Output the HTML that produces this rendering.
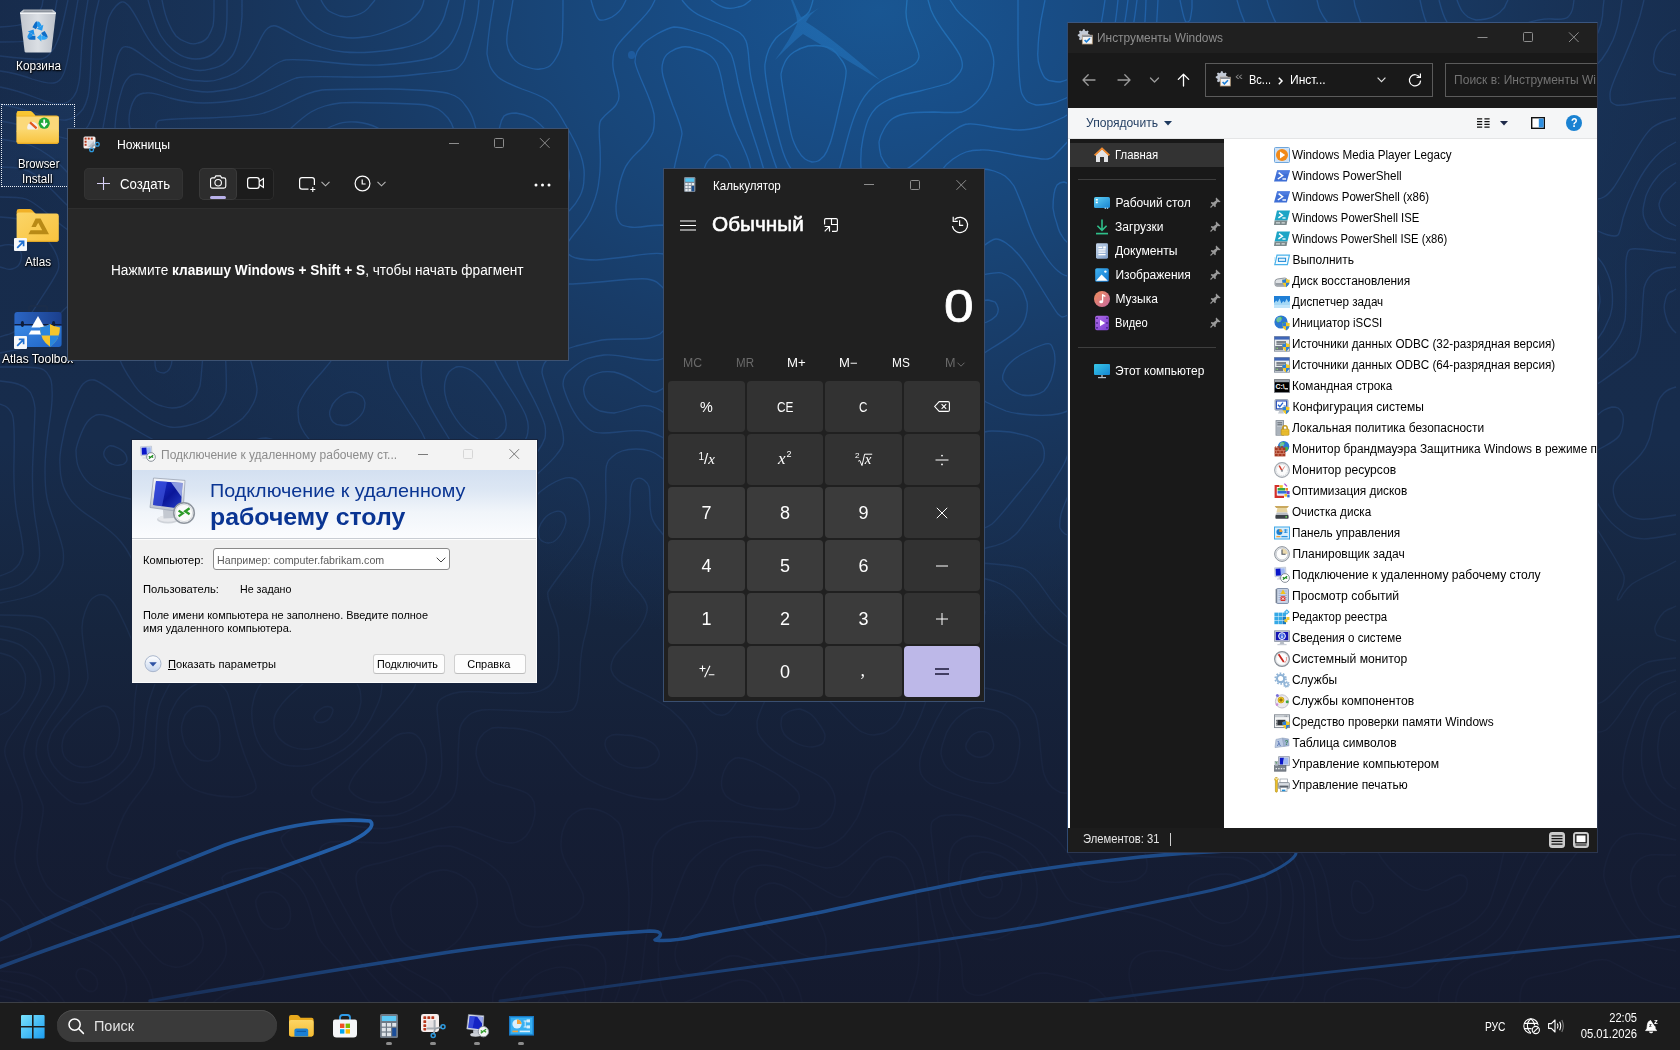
<!DOCTYPE html>
<html lang="ru"><head><meta charset="utf-8"><title>Desktop</title>
<style>
html,body{margin:0;padding:0;}
body{width:1680px;height:1050px;overflow:hidden;position:relative;font-family:"Liberation Sans","DejaVu Sans",sans-serif;font-size:12px;background:#15203a;}
.t{position:absolute;white-space:nowrap;line-height:1;transform-origin:0 50%;}
.a{position:absolute;}
.win{position:absolute;box-sizing:border-box;overflow:hidden;}
svg{position:absolute;overflow:visible;}
.sh{text-shadow:0 1px 2px rgba(0,0,0,.95),0 0 3px rgba(0,0,0,.8),1px 1px 1px rgba(0,0,0,.7);}
.cb{position:absolute;box-sizing:border-box;border-radius:4px;background:#3b3b3b;}
.cb.f{background:#323232;}
</style></head><body>
<div class="a" id="wall" style="left:0;top:0;width:1680px;height:1050px;
background:
radial-gradient(ellipse 900px 640px at 880px 10px, #195692 0%, #184e88 16%, #184679 35%, #183c68 54%, rgba(24,51,88,.92) 75%, rgba(23,44,76,0) 100%),
linear-gradient(180deg,#172b4b 0%,#172c4c 42%,#16253e 60%,#151e35 76%,#14192d 100%);"></div>
<svg style="left:0;top:0;mix-blend-mode:overlay;opacity:.33;-webkit-mask-image:linear-gradient(180deg,#000 0%,#000 40%,rgba(0,0,0,.45) 75%,rgba(0,0,0,.3) 100%);mask-image:linear-gradient(180deg,#000 0%,#000 40%,rgba(0,0,0,.45) 75%,rgba(0,0,0,.3) 100%)" width="1680" height="1050" viewBox="0 0 1680 1050" fill="none" stroke="#ffffff" stroke-width="1.3"><path d="M0 27Q20 26 26 23Q32 21 36 16Q40 12 42 6L43 0M0 42Q28 42 34 40Q40 38 46 29Q52 21 55 11L57 0M0 56Q36 60 42 59Q48 57 51 52Q55 48 57 42Q60 36 64 18L68 0M0 71Q16 73 32 79Q48 84 54 83Q60 82 63 75Q67 68 72 34L78 0M0 87Q16 90 34 97Q52 104 58 104Q64 104 68 102Q72 99 74 96Q77 92 78 86Q80 80 81 58Q82 36 85 18L88 0M162 0Q165 16 169 24Q172 31 176 36Q180 40 186 42Q192 45 198 43Q204 42 208 37Q211 32 213 26Q214 20 214 10L214 0M1552 321Q1556 320 1560 317Q1564 315 1568 309Q1571 304 1572 298Q1572 292 1571 288Q1569 284 1565 278Q1560 273 1545 260Q1530 248 1517 229Q1504 210 1500 209Q1496 207 1494 207Q1492 208 1475 228Q1458 248 1457 252Q1456 256 1458 258Q1460 260 1474 265Q1488 269 1494 273Q1500 277 1514 294Q1528 312 1532 315Q1536 319 1542 320Q1548 322 1552 321ZM1345 853Q1347 852 1347 844Q1348 836 1346 824Q1344 812 1340 802Q1336 792 1332 787Q1328 783 1320 781Q1312 779 1302 781Q1292 783 1282 772Q1272 760 1264 755Q1256 751 1248 751Q1240 752 1233 756Q1227 760 1225 764Q1223 768 1223 772Q1223 776 1226 779Q1228 782 1232 785Q1236 787 1242 788Q1248 789 1256 789Q1264 788 1274 786Q1284 784 1286 782Q1288 781 1306 809Q1324 837 1332 845Q1340 853 1342 854Q1344 855 1345 853ZM1365 913Q1370 912 1372 908Q1374 904 1373 900Q1373 896 1368 890Q1364 884 1360 882Q1356 880 1354 882Q1353 884 1352 888Q1351 892 1352 900Q1353 908 1357 911Q1360 914 1365 913ZM22 1048Q20 1040 17 1036Q14 1032 7 1029L0 1026M0 104Q16 107 38 114Q60 121 66 120Q72 119 76 116Q80 113 83 109Q86 104 88 96Q90 88 91 60Q92 33 95 16L99 0M148 0Q156 28 161 36Q166 44 173 50Q180 56 188 58Q196 60 204 58Q212 56 217 50Q223 44 225 36Q227 28 227 14L227 0M321 0Q325 8 329 11Q332 13 340 16Q348 18 357 15Q366 12 370 6L375 0M1545 340Q1550 340 1559 336Q1568 332 1575 324Q1582 316 1585 306Q1587 296 1585 288Q1583 280 1579 274Q1575 268 1562 256Q1548 244 1544 238Q1539 232 1529 204Q1518 176 1513 168Q1508 160 1502 156Q1496 152 1488 150Q1480 148 1472 147Q1464 147 1456 149Q1448 151 1444 153Q1440 156 1436 162Q1432 168 1424 195Q1416 222 1416 235Q1415 248 1419 260Q1423 272 1427 278Q1431 284 1436 287Q1440 290 1446 292Q1452 294 1466 295Q1480 296 1485 298Q1490 300 1495 304Q1500 309 1508 318Q1516 328 1522 333Q1528 337 1534 339Q1540 341 1545 340ZM1363 940Q1374 940 1386 936Q1397 932 1413 922Q1428 912 1442 908Q1456 904 1461 898Q1467 892 1467 886Q1468 880 1466 878Q1464 875 1460 875Q1456 875 1444 882Q1432 888 1428 890Q1424 891 1418 889Q1412 887 1404 881Q1396 875 1389 868Q1382 860 1377 851Q1372 841 1361 807Q1350 772 1347 768Q1344 763 1339 760Q1334 756 1317 750Q1300 744 1288 737Q1276 731 1270 729Q1264 728 1252 730Q1240 732 1228 738Q1216 744 1212 748Q1208 752 1205 758Q1203 764 1203 770Q1203 776 1205 782Q1208 788 1212 792Q1216 795 1220 797Q1224 799 1246 803Q1268 806 1274 809Q1280 811 1284 814Q1288 817 1297 828Q1307 840 1315 854Q1323 868 1325 876Q1328 884 1330 902Q1332 920 1334 925Q1336 931 1340 935Q1344 938 1348 939Q1352 941 1363 940ZM575 1048Q573 1020 572 1012Q570 1004 567 999Q564 994 560 992Q556 991 550 993Q544 995 539 1001Q534 1008 531 1016Q528 1024 528 1036L527 1048M30 1048Q27 1036 24 1031Q20 1026 16 1023Q12 1020 6 1019L0 1017M0 121Q20 124 42 131Q64 139 70 139Q76 138 80 135Q84 132 88 126Q92 119 95 108Q99 96 102 60Q106 24 109 17Q112 10 116 6Q120 2 122 2Q124 1 128 5Q132 9 140 24Q148 40 155 48Q162 56 171 62Q180 67 190 69Q200 72 210 69Q220 67 225 63Q229 60 232 56Q235 52 238 42Q241 32 242 16L242 0M296 0Q303 16 310 22Q316 28 324 32Q332 36 342 37Q352 39 364 37Q376 36 390 30Q404 25 410 21Q416 16 419 12Q422 8 423 4L424 0M1457 0Q1460 8 1462 11Q1464 14 1468 17Q1472 19 1476 20Q1480 20 1486 19Q1492 18 1496 15Q1500 13 1502 10Q1505 8 1506 4L1508 0M1540 358Q1552 356 1564 349Q1576 342 1581 337Q1586 332 1590 326Q1594 320 1597 314Q1599 308 1600 302Q1600 296 1598 286Q1595 276 1591 270Q1587 264 1575 252Q1562 240 1556 232Q1550 224 1546 214Q1542 204 1537 182Q1532 160 1530 156Q1528 151 1525 148Q1521 144 1513 140Q1504 135 1488 132Q1472 128 1462 129Q1452 129 1444 132Q1436 134 1429 139Q1423 144 1418 150Q1413 156 1404 172Q1395 188 1392 196Q1390 204 1389 210Q1389 216 1391 224Q1392 232 1398 251Q1404 270 1409 281Q1413 292 1417 298Q1421 304 1426 309Q1432 314 1438 317Q1444 320 1458 324Q1472 329 1483 338Q1494 348 1499 351Q1504 354 1516 357Q1528 359 1540 358ZM1676 182Q1664 192 1662 196Q1660 200 1659 204Q1659 208 1662 214Q1665 220 1670 223L1676 226M1146 381Q1155 380 1159 378Q1163 376 1165 372Q1168 368 1165 362Q1163 356 1159 354Q1156 351 1150 349Q1144 348 1140 348Q1136 348 1132 351Q1128 353 1125 359Q1122 364 1122 368Q1123 372 1124 374Q1125 376 1131 379Q1136 381 1146 381ZM0 576Q8 573 12 571Q16 568 19 564Q21 560 23 554Q24 548 19 524Q13 500 14 460Q15 420 12 414Q9 408 5 406L0 404M1375 958Q1403 956 1433 942Q1464 928 1470 924Q1476 921 1480 916Q1484 912 1488 906Q1491 900 1494 890Q1498 880 1502 860Q1507 840 1507 834Q1506 828 1505 827Q1504 826 1500 825Q1496 825 1460 838Q1424 850 1418 850Q1412 850 1408 848Q1404 847 1398 841Q1392 836 1387 828Q1382 820 1379 812Q1376 804 1372 787Q1368 769 1364 762Q1360 755 1354 749Q1348 743 1332 733Q1316 723 1306 712Q1296 702 1292 699Q1288 697 1284 696Q1280 696 1274 698Q1268 700 1241 714Q1215 728 1207 733Q1200 739 1196 743Q1192 748 1190 756Q1187 764 1188 772Q1189 780 1191 786Q1194 792 1197 796Q1200 800 1206 804Q1212 808 1240 814Q1268 819 1274 823Q1280 826 1285 831Q1290 836 1297 846Q1304 856 1308 866Q1313 876 1314 884Q1316 892 1317 912Q1318 932 1320 938Q1321 944 1324 948Q1327 952 1331 955Q1336 957 1342 958Q1348 959 1375 958ZM585 1048Q586 996 585 988Q584 980 580 975Q576 969 568 968Q560 966 550 969Q540 972 535 976Q530 980 525 986Q521 992 518 1002Q514 1012 513 1030L513 1048M37 1048Q34 1032 29 1026Q25 1020 18 1016Q12 1012 6 1011L0 1010M0 139Q20 142 30 145Q40 149 48 155Q56 160 68 173Q80 185 83 187Q85 188 89 188Q92 188 94 186Q97 184 98 180Q100 177 100 162Q100 148 101 140Q102 132 109 96Q116 60 118 55Q120 50 122 48Q124 46 128 47Q132 47 146 58Q160 68 168 72Q176 77 184 79Q192 81 202 81Q212 82 220 79Q228 77 235 73Q243 68 247 62Q252 56 258 44Q264 31 268 28Q272 25 276 26Q280 27 295 36Q310 44 321 47Q332 51 344 52Q356 53 372 52Q388 51 402 48Q416 45 424 41Q432 36 438 28Q444 20 446 10L449 0M1267 0Q1270 12 1279 29Q1288 46 1298 81Q1307 116 1310 119Q1312 122 1316 123Q1320 124 1328 121Q1336 119 1342 115Q1348 110 1351 105Q1354 100 1356 92Q1357 84 1356 76Q1355 68 1352 60Q1349 52 1345 45Q1340 37 1331 27Q1322 16 1319 8L1317 0M1439 0Q1443 16 1447 22Q1451 28 1456 32Q1462 36 1469 37Q1476 38 1486 36Q1496 35 1518 26Q1540 18 1552 19Q1565 20 1568 17Q1572 13 1573 7L1574 0M1503 380Q1515 380 1525 379Q1536 377 1546 374Q1556 371 1566 365Q1576 359 1585 352Q1594 344 1599 337Q1604 331 1607 323Q1611 316 1612 308Q1613 300 1612 290Q1611 280 1606 270Q1602 260 1586 246Q1571 232 1566 224Q1560 216 1556 204Q1552 192 1550 172Q1548 152 1544 144Q1540 136 1532 131Q1524 126 1502 121Q1480 115 1470 114Q1460 113 1450 114Q1440 115 1428 121Q1416 127 1407 136Q1398 144 1383 166Q1368 188 1367 194Q1365 200 1366 206Q1367 212 1378 240Q1389 268 1393 282Q1396 296 1399 314Q1402 332 1405 337Q1408 343 1414 347Q1420 352 1445 364Q1471 376 1481 378Q1492 380 1503 380ZM1676 163Q1664 169 1658 176Q1652 183 1649 189Q1645 196 1644 204Q1642 212 1644 218Q1646 224 1649 228Q1652 231 1658 234Q1664 238 1670 239L1676 240M979 324Q982 324 987 322Q992 320 996 316Q999 312 998 308Q997 304 995 302Q992 301 988 300Q984 300 980 302Q976 303 971 308Q966 312 967 316Q968 321 971 322Q975 324 979 324ZM1126 395Q1141 396 1152 394Q1164 392 1172 388Q1180 384 1184 378Q1188 372 1188 366Q1189 360 1185 354Q1181 348 1173 342Q1164 336 1154 331Q1144 327 1136 327Q1128 326 1122 330Q1116 333 1111 341Q1106 348 1102 356Q1099 364 1099 372Q1099 380 1100 384Q1102 388 1107 391Q1112 394 1126 395ZM164 373Q168 372 170 368Q172 364 172 360Q171 356 170 353Q168 351 164 351Q160 351 157 353Q154 356 155 362Q155 368 157 371Q160 373 164 373ZM489 441Q494 440 498 438Q501 436 504 432Q507 428 506 422Q506 416 503 410Q500 404 492 393Q484 381 478 376Q472 370 466 368Q460 366 456 367Q452 369 449 372Q446 376 445 382Q444 388 445 394Q446 400 449 407Q452 413 456 419Q460 425 466 431Q472 436 478 439Q484 441 489 441ZM0 590Q16 587 22 583Q28 579 32 574Q37 568 39 560Q41 552 36 524Q31 496 33 456Q35 416 35 408Q34 400 32 396Q31 392 27 389Q24 386 20 385Q16 383 8 382L0 381M853 556Q858 556 865 553Q872 550 888 537Q904 525 910 522Q916 519 920 519Q924 520 942 526Q960 532 968 532Q976 532 982 529Q988 527 992 524Q997 520 1018 494Q1040 468 1043 462Q1045 456 1044 450Q1043 444 1039 441Q1036 439 1028 436Q1020 434 1010 432Q1000 431 992 431Q984 431 978 435Q972 439 967 452Q961 464 957 471Q952 478 946 483Q940 489 932 494Q924 499 918 501Q912 502 894 498Q876 494 870 495Q864 496 858 498Q852 501 848 504Q843 508 840 512Q838 516 836 520Q834 524 834 530Q833 536 835 541Q836 546 838 549Q841 552 844 554Q848 556 853 556ZM1327 1048Q1323 1000 1325 996Q1326 992 1328 990Q1330 988 1339 984Q1348 980 1356 979Q1364 978 1372 979Q1380 980 1390 984Q1400 988 1404 988Q1408 988 1412 986Q1416 983 1430 970Q1444 956 1462 946Q1480 936 1486 932Q1492 927 1497 919Q1502 912 1511 890Q1520 868 1531 848Q1541 828 1543 818Q1545 808 1544 802Q1543 796 1539 790Q1536 785 1532 782Q1528 780 1524 779Q1520 779 1514 781Q1508 783 1492 794Q1476 806 1466 811Q1456 815 1442 818Q1428 820 1422 819Q1416 818 1412 816Q1408 815 1402 807Q1396 800 1391 782Q1386 764 1383 758Q1380 751 1375 746Q1370 740 1358 730Q1345 720 1340 714Q1334 708 1325 688Q1316 667 1312 665Q1308 662 1304 662Q1300 661 1292 663Q1284 664 1278 667Q1272 670 1254 685Q1236 700 1214 714Q1192 727 1185 736Q1178 744 1176 752Q1174 760 1174 766Q1174 772 1176 780Q1178 788 1181 794Q1184 800 1188 805Q1192 810 1196 813Q1201 816 1206 818Q1212 820 1232 823Q1252 825 1260 828Q1268 831 1278 839Q1287 848 1294 860Q1300 872 1303 884Q1305 896 1304 920Q1303 944 1303 964Q1304 984 1302 988Q1300 992 1290 1007Q1280 1021 1277 1029Q1274 1036 1273 1042L1272 1048M83 767Q89 768 98 764Q107 760 111 756Q114 752 116 748Q118 744 119 738Q120 732 119 726Q118 720 116 716Q115 712 111 709Q108 706 104 706Q100 706 92 710Q84 714 76 721Q69 728 65 734Q62 740 62 746Q62 752 64 756Q66 760 71 763Q76 767 83 767ZM1676 711Q1668 715 1665 720Q1662 724 1660 730Q1659 736 1658 744Q1657 752 1660 764Q1662 776 1665 780Q1668 784 1672 787L1676 789M434 953Q444 952 449 948Q455 944 460 938Q464 932 470 922Q475 912 477 906Q478 900 476 894Q475 888 472 884Q469 880 462 876Q456 872 450 871Q444 869 436 871Q428 872 415 880Q402 888 397 894Q393 900 391 906Q390 912 393 922Q395 932 401 940Q408 948 416 951Q424 954 434 953ZM993 897Q998 896 1000 892Q1003 888 1002 882Q1000 876 996 873Q992 871 987 871Q983 872 980 876Q977 880 978 886Q979 892 983 895Q988 899 993 897ZM594 1048Q596 1021 601 1000Q606 980 606 972Q606 964 605 960Q604 956 600 952Q597 948 592 947Q588 945 582 945Q576 944 564 946Q552 947 542 951Q532 954 524 959Q517 964 508 972Q500 980 498 984Q495 988 493 994Q492 1000 494 1024L497 1048M44 1048Q41 1032 36 1024Q31 1016 24 1011Q16 1006 8 1004L0 1003M0 167Q16 167 22 169Q28 170 34 174Q40 178 56 194Q72 211 78 213Q84 216 90 215Q96 214 104 209Q112 203 118 194Q123 184 124 178Q124 172 120 156Q116 140 115 130Q115 120 118 104Q122 88 124 84Q126 80 129 77Q132 74 138 74Q144 74 164 82Q184 90 196 91Q208 93 218 91Q228 90 236 88Q244 85 250 82Q256 79 266 71Q276 63 282 61Q288 58 326 62Q364 66 380 65Q396 64 410 62Q424 60 432 58Q440 55 446 49Q452 44 456 34Q461 24 463 12L465 0M1180 0Q1184 20 1186 22Q1188 23 1190 20Q1191 16 1192 8L1192 0M1237 0Q1243 24 1255 40Q1267 56 1270 62Q1274 68 1277 82Q1280 96 1279 106Q1277 116 1264 138Q1250 160 1246 174Q1243 188 1242 218Q1241 248 1239 270Q1236 292 1238 299Q1240 306 1245 311Q1250 316 1257 318Q1264 321 1272 321Q1280 322 1286 320Q1292 319 1296 315Q1300 312 1301 306Q1303 300 1298 278Q1293 256 1295 246Q1296 236 1299 230Q1303 224 1307 220Q1312 215 1318 213Q1324 211 1328 212Q1332 212 1338 215Q1344 219 1350 225Q1356 232 1362 241Q1368 251 1371 260Q1375 268 1377 276Q1378 284 1378 292Q1378 300 1374 316Q1369 332 1368 338Q1367 344 1369 350Q1371 356 1376 362Q1381 368 1392 375Q1404 381 1428 388Q1452 394 1470 395Q1488 397 1510 396Q1532 395 1542 393Q1552 390 1562 385Q1572 380 1588 368Q1603 356 1610 348Q1617 340 1620 334Q1623 328 1625 320Q1626 312 1626 286Q1625 260 1627 255Q1628 249 1632 249Q1636 248 1656 251L1676 253M1676 142Q1660 150 1650 163Q1640 176 1634 190Q1627 204 1623 218Q1620 233 1618 235Q1616 237 1608 235Q1600 233 1590 226Q1581 220 1575 212Q1570 204 1567 194Q1565 184 1564 162Q1562 140 1560 134Q1557 128 1553 123Q1548 119 1542 116Q1536 113 1518 110Q1500 106 1478 99Q1456 93 1448 94Q1440 95 1422 101Q1404 108 1400 109Q1396 109 1392 108Q1388 106 1385 99Q1381 92 1376 72Q1371 52 1364 32Q1357 12 1355 6L1354 0M1420 0Q1424 20 1430 30Q1436 41 1442 47Q1448 53 1456 55Q1464 58 1492 51Q1520 45 1528 45Q1536 46 1550 51Q1564 56 1572 55Q1580 53 1586 49Q1592 44 1595 38Q1599 32 1601 24Q1603 16 1603 8L1604 0M537 179Q541 180 543 178Q545 176 545 172Q545 168 543 164Q540 160 536 159Q532 157 530 159Q528 160 527 166Q527 172 530 175Q532 179 537 179ZM485 465Q495 464 501 461Q508 458 514 453Q520 448 524 442Q528 436 528 430Q529 424 526 416Q523 408 510 388Q497 368 493 356Q488 344 488 338Q489 332 496 316Q503 300 503 294Q503 288 502 282Q500 276 498 272Q496 267 492 263Q488 259 484 257Q480 255 476 254Q472 254 468 257Q464 260 462 264Q460 268 458 294Q455 320 453 324Q450 328 441 336Q432 343 428 348Q425 352 423 358Q421 364 421 370Q421 376 422 384Q424 392 427 400Q430 408 445 432Q460 457 464 460Q468 464 472 465Q476 467 485 465ZM850 577Q856 576 876 563Q896 550 904 547Q912 543 920 542Q928 542 952 546Q976 549 986 548Q996 546 1003 543Q1010 540 1016 534Q1022 528 1041 500Q1060 472 1064 464Q1068 456 1073 438Q1079 420 1085 417Q1092 414 1130 408Q1168 401 1179 397Q1191 392 1195 388Q1200 384 1203 378Q1206 372 1207 364Q1208 356 1206 350Q1204 344 1197 338Q1190 332 1167 319Q1144 305 1138 303Q1132 301 1126 301Q1120 301 1116 303Q1112 305 1108 309Q1104 312 1096 326Q1088 340 1084 352Q1079 364 1076 384Q1073 404 1071 408Q1068 412 1058 414Q1048 416 1032 415Q1016 414 1006 411Q996 407 986 402Q977 396 972 390Q966 384 964 378Q963 372 968 366Q973 360 992 348Q1012 336 1018 330Q1024 324 1026 316Q1028 308 1027 302Q1025 296 1023 291Q1020 286 1014 280Q1008 275 1002 273Q996 271 962 280Q928 288 925 292Q922 296 922 302Q922 308 933 336Q944 364 943 368Q942 372 935 382Q928 392 927 396Q926 400 932 418Q937 436 937 442Q937 448 935 452Q934 456 931 460Q928 464 922 467Q916 471 894 474Q872 477 860 482Q848 487 838 495Q828 504 823 516Q817 528 816 540Q815 552 819 560Q822 568 829 573Q836 578 840 578Q844 579 850 577ZM172 408Q176 408 180 407Q184 406 188 403Q193 400 195 396Q198 392 200 386Q201 380 203 354Q204 328 202 323Q200 318 196 315Q191 312 184 313Q176 313 152 321Q128 328 124 330Q120 332 118 336Q115 340 116 346Q117 352 120 360Q123 368 131 380Q138 392 147 398Q156 405 162 406Q168 408 172 408ZM0 603Q28 598 38 593Q47 588 54 580Q61 572 63 564Q64 556 63 550Q62 544 56 526Q49 508 47 498Q45 488 45 470Q45 452 49 426Q53 400 52 390Q52 380 49 376Q47 372 44 370Q40 367 20 367L0 367M1101 600Q1107 600 1109 598Q1112 596 1113 594Q1113 592 1113 588Q1112 584 1111 582Q1109 580 1104 578Q1100 576 1094 578Q1088 580 1086 584Q1085 588 1087 592Q1089 596 1092 598Q1096 600 1101 600ZM90 782Q100 780 109 774Q118 768 124 760Q130 752 131 744Q133 736 134 718Q134 700 137 684Q141 668 139 660Q137 652 127 629Q116 605 112 601Q108 596 104 595Q100 594 96 596Q92 598 90 601Q88 604 85 612Q82 620 82 628Q82 636 85 654Q88 672 88 678Q87 684 84 690Q81 696 68 712Q54 728 51 734Q49 740 48 744Q47 748 49 756Q51 764 58 771Q64 778 72 781Q80 784 90 782ZM1445 1048Q1437 1004 1439 994Q1441 984 1445 978Q1448 973 1452 969Q1456 965 1474 956Q1492 946 1500 938Q1508 930 1522 901Q1536 872 1551 850Q1566 828 1569 820Q1571 812 1570 804Q1569 796 1566 788Q1564 780 1559 772Q1555 764 1549 759Q1544 754 1538 753Q1532 751 1526 751Q1520 752 1514 754Q1508 757 1492 769Q1476 781 1468 786Q1460 790 1452 791Q1444 792 1436 789Q1428 786 1424 781Q1420 776 1415 764Q1411 752 1407 746Q1403 740 1386 728Q1368 715 1361 708Q1354 700 1352 694Q1350 688 1349 682Q1349 676 1351 670Q1352 664 1357 652Q1362 640 1362 636Q1362 632 1358 626Q1353 620 1345 617Q1336 614 1330 615Q1324 617 1292 636Q1260 655 1242 673Q1224 691 1206 703Q1188 714 1182 719Q1176 724 1172 730Q1167 736 1164 742Q1162 748 1161 756Q1161 764 1162 772Q1163 780 1167 790Q1170 800 1175 808Q1180 816 1184 820Q1188 823 1194 826Q1200 829 1224 832Q1248 835 1256 838Q1264 840 1272 848Q1281 856 1286 868Q1292 880 1293 894Q1294 908 1289 928Q1285 948 1281 959Q1276 970 1261 995Q1246 1020 1243 1028Q1240 1036 1239 1042L1238 1048M720 715Q724 716 728 713Q732 710 737 701Q742 692 744 684Q745 676 744 670Q743 664 737 658Q731 652 720 647Q708 641 700 640Q692 638 686 640Q680 641 677 645Q674 648 673 652Q671 656 674 664Q676 672 692 690Q708 709 712 712Q716 715 720 715ZM1676 693Q1660 700 1655 706Q1651 712 1647 722Q1644 732 1642 744Q1641 756 1642 766Q1644 776 1647 784Q1651 792 1657 798Q1663 804 1669 807L1676 810M324 722Q329 720 331 716Q333 712 333 710Q332 707 330 707Q328 706 324 707Q320 709 317 712Q314 716 314 718Q314 720 317 722Q320 723 324 722ZM786 809Q792 808 795 806Q798 804 799 800Q800 796 798 792Q795 788 790 784Q786 780 775 773Q764 767 754 762Q744 758 740 758Q736 757 732 760Q728 763 726 767Q723 772 722 778Q721 784 722 788Q723 792 726 796Q730 800 737 803Q744 806 752 807Q760 809 770 809Q780 810 786 809ZM603 1048Q607 1020 617 996Q626 972 628 936Q630 900 628 884Q626 868 624 848Q623 828 618 822Q612 816 606 813Q600 810 594 809Q588 808 584 809Q580 809 576 812Q572 814 568 819Q565 824 563 830Q561 836 561 846Q561 856 571 872Q581 888 583 894Q584 900 583 904Q582 908 579 912Q576 916 568 920Q559 924 548 926Q536 928 528 926Q520 924 518 920Q515 916 513 902Q510 888 507 882Q504 876 494 868Q484 860 470 854Q456 847 450 846Q444 846 438 846Q432 847 414 853Q396 859 380 863Q364 866 360 869Q356 872 356 878Q356 884 359 894Q362 904 373 926Q384 948 392 957Q400 966 418 975Q435 984 442 989Q448 995 457 1009Q467 1024 470 1036L474 1048M997 918Q1003 916 1008 912Q1013 908 1017 902Q1020 896 1021 890Q1022 884 1021 878Q1019 872 1016 867Q1012 863 1006 859Q1000 855 992 853Q984 851 978 853Q972 854 969 857Q965 860 963 866Q961 872 960 880Q960 888 962 894Q964 901 968 906Q972 912 976 915Q980 917 986 918Q992 919 997 918ZM52 1048Q47 1028 42 1019Q36 1010 28 1005Q20 1000 10 998L0 996M1633 1048Q1628 1032 1622 1024Q1616 1016 1610 1012Q1604 1007 1596 1006Q1588 1005 1580 1006Q1572 1008 1566 1012Q1561 1016 1559 1022Q1557 1028 1557 1038L1557 1048M1350 1048Q1353 1024 1356 1020Q1358 1016 1361 1015Q1364 1013 1367 1015Q1370 1016 1373 1020Q1375 1024 1377 1036L1378 1048M0 197Q20 197 26 199Q32 201 48 214Q64 228 70 231Q76 235 80 235Q84 236 90 234Q96 233 102 229Q108 225 115 219Q123 212 130 204Q136 196 139 190Q143 184 143 176Q144 168 137 152Q131 136 130 128Q128 120 130 111Q132 102 136 97Q140 93 146 93Q152 92 170 98Q188 103 204 103Q220 103 238 100Q256 97 272 89Q288 81 296 78Q304 76 346 77Q388 78 420 74Q452 71 456 69Q460 67 464 61Q467 56 472 38Q477 20 478 10L479 0M1158 0Q1155 56 1153 64Q1150 72 1142 90Q1134 108 1132 114Q1131 120 1131 126Q1131 132 1134 140Q1138 148 1145 155Q1152 162 1162 167Q1172 172 1184 175Q1196 178 1198 180Q1200 183 1204 196Q1208 210 1209 225Q1211 240 1209 250Q1208 260 1202 274Q1196 288 1192 291Q1188 294 1184 294Q1180 294 1162 286Q1144 278 1138 277Q1132 276 1126 276Q1120 277 1110 282Q1100 287 1086 300Q1072 313 1068 315Q1064 317 1062 317Q1060 316 1058 314Q1056 312 1040 286Q1024 260 1018 254Q1012 247 1006 243Q1000 239 996 239Q992 239 981 248Q970 256 963 259Q956 262 936 263Q916 265 912 266Q908 267 905 272Q901 276 901 282Q900 288 904 314Q909 340 908 346Q908 352 901 368Q893 384 892 392Q890 400 893 420Q897 440 894 444Q892 448 889 450Q887 452 869 461Q852 470 842 477Q832 484 822 494Q812 504 807 514Q802 524 793 544Q785 564 784 570Q784 576 785 586Q787 596 786 600Q785 604 783 606Q781 608 775 611Q768 613 760 614Q752 615 744 613Q736 612 730 608Q724 605 715 590Q707 576 687 558Q667 540 661 532Q654 524 652 518Q650 512 650 502Q650 492 649 487Q648 483 644 480Q640 477 636 479Q632 481 631 487Q630 492 630 506Q631 520 627 534Q623 548 622 556Q621 564 624 572Q627 580 637 590Q646 600 647 606Q648 612 643 622Q638 632 625 644Q613 656 612 662Q610 668 612 672Q613 676 617 679Q620 683 642 693Q664 704 672 711Q680 718 686 725Q691 732 694 738Q697 744 697 752Q697 760 695 768Q693 776 688 783Q684 789 678 793Q672 797 666 799Q660 800 650 799Q640 798 628 795Q616 791 604 787Q592 782 584 777Q576 772 565 758Q554 744 549 740Q544 736 532 732Q520 728 508 728Q496 727 492 728Q488 730 484 733Q480 737 478 742Q476 748 476 754Q477 760 479 766Q481 772 484 776Q488 780 492 782Q496 784 510 787Q524 791 528 794Q532 797 534 802Q535 808 535 814Q534 820 532 826Q529 832 526 836Q522 840 519 841Q516 843 510 843Q504 843 486 836Q468 829 460 827Q452 826 444 828Q436 829 414 836Q392 842 384 843Q376 843 356 842Q336 841 330 842Q324 844 322 846Q320 848 319 852Q319 856 320 860Q322 864 339 898Q357 932 372 953Q388 975 406 987Q424 999 430 1005Q436 1010 442 1019Q447 1028 450 1038L453 1048M1676 118Q1660 122 1653 127Q1646 132 1633 155Q1620 178 1614 187Q1608 195 1604 197Q1600 199 1598 199Q1596 199 1592 197Q1588 194 1585 185Q1581 176 1581 154Q1581 132 1573 112Q1566 92 1569 88Q1572 84 1584 75Q1596 66 1602 59Q1608 51 1613 40Q1618 28 1620 14L1622 0M818 161Q820 160 824 156Q827 152 829 146Q832 140 839 108Q847 76 846 70Q845 64 840 58Q836 52 832 49Q828 47 822 46Q816 45 808 46Q800 48 794 52Q788 56 785 62Q782 68 781 74Q781 80 786 106Q790 132 793 140Q796 148 799 152Q801 156 805 159Q808 161 812 162Q816 162 818 161ZM1542 86Q1540 89 1534 90Q1528 92 1520 91Q1512 91 1505 87Q1499 84 1497 80Q1496 76 1498 73Q1500 71 1504 69Q1508 67 1516 66Q1524 66 1528 67Q1532 69 1536 73Q1541 76 1542 80Q1544 84 1542 86ZM1212 155Q1208 156 1205 154Q1203 152 1201 144Q1199 136 1199 126Q1200 116 1202 108Q1204 100 1208 94Q1212 88 1218 83Q1224 79 1230 77Q1236 75 1240 75Q1244 76 1248 79Q1252 82 1254 87Q1257 92 1257 96Q1257 100 1256 106Q1254 112 1249 120Q1244 128 1238 134Q1232 141 1224 147Q1216 154 1212 155ZM531 208Q538 208 545 206Q552 204 559 198Q565 192 567 186Q570 180 569 172Q568 164 563 154Q557 144 549 134Q540 123 532 118Q524 114 516 113Q508 113 504 116Q501 120 500 126Q498 132 499 148Q500 163 502 174Q504 185 506 191Q509 196 512 200Q516 204 520 206Q524 208 531 208ZM302 285Q308 284 312 280Q316 276 318 268Q321 260 320 254Q319 248 316 242Q312 236 306 232Q300 227 290 223Q280 220 272 219Q264 219 259 222Q255 224 252 228Q250 232 250 238Q249 244 251 250Q253 256 256 260Q259 264 265 270Q271 276 278 280Q284 284 290 285Q296 286 302 285ZM321 605Q326 604 337 598Q348 593 364 581Q380 570 404 565Q428 560 440 554Q453 548 461 540Q468 532 478 514Q489 496 510 477Q532 458 538 451Q543 444 545 438Q546 432 545 426Q544 420 533 398Q521 376 519 368Q516 360 517 352Q518 344 525 330Q533 316 533 312Q532 308 520 278Q508 249 504 243Q500 238 494 234Q488 230 476 228Q464 227 456 229Q448 232 445 238Q442 244 441 264Q440 284 437 294Q434 304 429 310Q424 316 410 326Q396 336 393 342Q389 348 388 356Q387 364 389 372Q390 380 394 388Q399 396 409 412Q420 428 424 437Q428 446 429 453Q429 460 427 466Q425 472 414 484Q404 496 390 516Q377 536 370 541Q364 545 358 546Q352 547 344 547Q336 547 306 541Q276 536 269 538Q261 540 258 544Q254 548 254 552Q253 556 255 562Q257 568 267 578Q276 587 290 596Q304 604 310 605Q316 606 321 605ZM1352 297Q1348 301 1344 302Q1340 302 1336 300Q1332 298 1326 289Q1321 280 1318 270Q1316 260 1317 256Q1318 252 1321 248Q1324 244 1328 243Q1332 242 1336 244Q1340 245 1344 248Q1348 252 1352 258Q1356 264 1357 274Q1359 284 1357 288Q1356 293 1352 297ZM613 1048Q619 1024 628 1010Q636 996 638 990Q641 984 643 962Q645 940 649 920Q653 900 652 878Q652 856 654 850Q656 844 659 840Q662 836 669 831Q676 826 688 823Q700 820 716 821Q732 821 764 825Q796 829 804 829Q812 829 819 827Q825 824 830 818Q834 812 835 804Q836 796 832 789Q828 782 824 779Q820 776 798 765Q776 754 768 746Q760 738 758 733Q757 728 757 722Q758 716 763 705Q768 694 772 690Q776 686 780 685Q784 683 790 682Q796 682 802 683Q808 685 818 692Q828 699 842 714Q856 729 862 732Q868 735 874 735Q880 734 884 733Q888 731 892 728Q896 725 899 720Q902 716 905 706Q908 696 906 688Q904 680 898 673Q892 666 874 653Q856 640 853 636Q850 632 848 626Q846 620 847 616Q848 612 852 606Q856 600 874 584Q892 567 900 563Q908 558 916 557Q924 555 946 559Q968 562 994 564Q1020 566 1026 570Q1032 573 1044 590Q1056 608 1066 616Q1076 624 1082 626Q1088 629 1096 630Q1104 632 1117 630Q1129 628 1138 622Q1147 616 1151 608Q1155 600 1156 594Q1157 588 1156 582Q1155 576 1151 566Q1146 556 1140 550Q1134 544 1125 540Q1116 537 1092 536Q1068 536 1065 534Q1062 532 1060 528Q1059 524 1061 514Q1064 504 1076 478Q1088 452 1092 445Q1096 439 1102 434Q1108 428 1118 424Q1128 420 1155 414Q1183 408 1191 405Q1200 402 1208 395Q1217 388 1228 370Q1240 352 1248 349Q1256 347 1266 347Q1276 348 1286 351Q1296 353 1310 363Q1324 372 1342 381Q1360 389 1374 399Q1387 408 1400 422Q1412 436 1416 438Q1420 441 1424 440Q1428 438 1438 429Q1448 420 1456 417Q1464 414 1476 412Q1488 411 1514 411Q1540 412 1548 410Q1556 409 1564 405Q1572 401 1602 381Q1632 360 1635 356Q1638 352 1639 346Q1641 340 1642 318Q1643 296 1644 288Q1646 280 1651 275Q1656 270 1666 268L1676 267M0 615Q24 615 32 616Q40 617 44 619Q48 621 52 627Q56 632 62 646Q68 660 69 670Q70 680 67 688Q65 696 51 716Q38 736 37 742Q36 748 36 754Q37 760 42 771Q48 781 58 791Q68 801 74 803Q80 805 88 803Q96 801 110 791Q124 781 131 773Q138 764 141 756Q143 748 145 728Q146 708 152 692Q158 676 159 670Q160 664 158 658Q157 652 149 634Q141 616 138 594Q136 572 133 562Q129 552 121 542Q113 532 95 520Q76 508 70 499Q64 490 62 482Q60 474 60 465Q59 456 63 438Q66 420 73 404Q79 388 83 384Q88 379 94 380Q100 381 124 400Q148 419 156 422Q164 426 170 427Q176 428 186 426Q196 424 204 420Q212 416 218 408Q224 400 226 392Q227 384 225 346Q222 308 219 301Q216 295 210 292Q204 289 198 290Q192 291 174 297Q156 303 148 305Q140 306 132 306Q124 306 108 302Q92 298 86 298Q80 298 72 303Q64 308 55 320Q47 332 41 337Q36 342 28 346Q20 350 10 351L0 353M1044 391Q1040 394 1034 395Q1028 396 1022 395Q1016 393 1010 389Q1005 384 1003 380Q1002 376 1004 372Q1005 368 1010 363Q1016 357 1026 352Q1036 347 1042 345Q1048 343 1050 344Q1052 345 1053 349Q1055 352 1055 362Q1054 372 1051 380Q1048 387 1044 391ZM1676 387Q1668 389 1664 393Q1660 397 1658 402Q1656 408 1653 422Q1651 436 1648 442Q1646 448 1641 454Q1636 460 1627 468Q1618 476 1615 482Q1612 488 1614 496Q1616 504 1620 508Q1623 512 1628 515Q1632 518 1640 519Q1648 520 1662 517L1676 515M348 425Q351 424 356 420Q361 416 363 412Q365 408 365 403Q364 397 360 395Q356 392 352 392Q348 392 344 394Q340 396 336 400Q332 404 331 408Q329 412 330 416Q331 420 333 422Q336 425 340 425Q344 426 348 425ZM1216 572Q1224 572 1230 569Q1236 565 1243 559Q1250 552 1256 544Q1262 536 1263 532Q1264 528 1261 520Q1258 512 1253 504Q1247 496 1243 492Q1238 488 1233 487Q1228 485 1220 487Q1212 489 1205 495Q1199 500 1194 508Q1189 516 1186 526Q1184 536 1185 544Q1186 552 1191 559Q1196 567 1202 570Q1208 573 1216 572ZM1462 1048Q1455 1008 1456 998Q1458 988 1461 984Q1463 980 1468 977Q1472 973 1490 968Q1508 963 1511 959Q1515 956 1531 923Q1548 890 1566 867Q1584 844 1588 836Q1593 828 1596 818Q1599 808 1598 800Q1597 792 1591 780Q1585 768 1579 758Q1572 748 1565 742Q1558 736 1551 733Q1544 729 1536 728Q1528 727 1520 729Q1512 730 1506 733Q1500 736 1488 744Q1476 753 1470 755Q1464 758 1460 758Q1456 757 1452 755Q1448 752 1444 744Q1440 736 1438 726Q1436 716 1437 710Q1438 704 1444 694Q1449 684 1449 680Q1450 676 1449 672Q1447 668 1444 664Q1440 660 1426 650Q1412 641 1401 626Q1390 612 1374 596Q1357 580 1354 574Q1350 568 1347 554Q1344 540 1340 534Q1336 528 1330 524Q1324 519 1316 517Q1308 515 1299 518Q1289 520 1287 522Q1284 524 1282 528Q1280 532 1281 536Q1282 540 1289 552Q1295 564 1297 570Q1300 576 1299 584Q1299 592 1296 598Q1293 604 1288 610Q1282 616 1265 628Q1248 641 1231 660Q1214 680 1190 698Q1166 716 1159 724Q1152 732 1149 738Q1147 744 1146 752Q1146 760 1149 772Q1152 784 1157 798Q1162 812 1168 820Q1173 828 1178 832Q1184 837 1190 839Q1196 841 1218 843Q1240 844 1248 846Q1256 849 1261 852Q1266 856 1269 860Q1273 864 1276 870Q1279 876 1280 882Q1281 888 1281 900Q1281 912 1277 924Q1273 936 1267 946Q1260 955 1252 961Q1244 967 1238 969Q1232 971 1226 970Q1220 970 1200 962Q1180 954 1170 952Q1160 950 1151 951Q1143 952 1137 956Q1132 960 1131 964Q1129 968 1129 974Q1129 980 1131 986Q1132 992 1135 998Q1138 1004 1145 1011Q1152 1019 1166 1027Q1180 1036 1184 1042L1188 1048M309 749Q319 748 327 744Q336 741 341 736Q347 732 351 726Q356 720 358 714Q360 708 361 702Q361 696 360 690Q358 684 354 680Q351 676 345 673Q340 670 332 670Q324 670 318 673Q312 676 298 688Q284 700 279 708Q273 716 274 724Q274 732 279 738Q284 744 292 747Q300 750 309 749ZM1676 681Q1656 687 1648 696Q1641 704 1634 722Q1627 740 1624 756Q1622 772 1623 780Q1625 788 1630 796Q1636 804 1646 811Q1656 818 1666 822L1676 826M991 940Q997 940 1007 935Q1016 930 1024 921Q1032 912 1035 904Q1038 896 1037 886Q1036 876 1032 868Q1028 860 1020 854Q1012 847 998 842Q984 836 974 836Q964 836 959 840Q953 844 951 850Q949 856 949 868Q948 880 950 891Q952 902 956 911Q960 919 966 926Q972 932 978 936Q984 939 991 940ZM174 967Q179 968 186 965Q192 963 197 957Q202 952 203 946Q204 940 201 932Q198 924 192 918Q185 912 176 908Q168 905 160 904Q152 903 145 905Q137 908 135 910Q134 912 132 916Q131 920 132 924Q133 928 136 934Q139 940 150 951Q160 962 164 964Q168 966 174 967ZM1676 989Q1652 984 1634 974Q1616 964 1610 961Q1604 959 1598 960Q1592 960 1578 966Q1564 972 1548 974Q1532 977 1528 979Q1524 982 1522 987Q1520 992 1520 1000Q1519 1008 1521 1028L1523 1048M59 1048Q54 1024 47 1014Q41 1004 32 999Q24 993 12 991L0 988M760 1048Q758 1028 755 1020Q752 1012 748 1008Q744 1004 740 1003Q736 1002 728 1004Q720 1007 711 1013Q702 1020 698 1026Q694 1032 693 1040L691 1048M169 1048Q171 1024 174 1016Q177 1008 196 990Q216 972 220 966Q225 960 226 954Q227 948 225 940Q223 932 218 922Q212 912 204 905Q196 898 176 891Q156 883 136 880Q115 876 112 874Q108 872 107 868Q106 864 115 838Q123 812 135 798Q146 784 149 779Q152 774 154 767Q155 760 156 736Q157 712 160 704Q163 696 172 680Q181 664 181 658Q180 652 170 638Q160 624 158 614Q155 604 158 592Q160 580 168 564Q176 548 178 542Q179 536 175 528Q172 520 164 513Q156 506 150 504Q144 502 126 498Q108 494 98 489Q88 484 83 476Q78 468 77 462Q76 456 76 450Q77 444 81 434Q85 424 89 420Q92 417 96 415Q100 414 108 416Q116 418 136 430Q156 442 164 444Q172 447 180 446Q188 446 196 444Q204 441 220 433Q236 424 243 418Q249 412 253 404Q257 396 257 390Q257 384 251 362Q246 340 246 330Q247 320 249 314Q251 308 255 306Q260 303 282 308Q304 312 311 312Q318 312 323 310Q328 309 331 306Q333 304 336 298Q338 292 340 272Q341 252 339 243Q336 234 329 227Q322 220 299 209Q276 197 268 195Q260 192 254 192Q248 191 240 193Q232 195 228 200Q224 204 222 210Q221 216 219 232Q217 248 214 254Q211 260 206 264Q201 268 187 276Q172 284 160 288Q148 291 142 291Q136 292 130 290Q124 289 114 282Q103 276 101 272Q98 268 98 264Q98 260 103 252Q109 244 135 218Q161 192 165 186Q170 180 171 176Q172 172 171 168Q171 164 163 146Q155 128 156 125Q156 123 158 121Q160 119 208 118Q256 116 264 113Q272 111 290 102Q308 92 322 90Q336 89 388 89Q440 90 450 94Q460 97 465 105Q471 112 474 122Q477 132 479 146Q481 160 481 170Q480 180 478 186Q476 192 470 195Q464 199 442 200Q420 202 416 205Q412 208 411 210Q410 212 410 216Q410 220 416 234Q421 248 423 256Q425 264 425 272Q425 280 422 286Q420 292 416 296Q413 300 408 303Q404 306 384 312Q364 319 359 321Q354 324 345 340Q336 356 322 372Q307 388 303 396Q298 404 298 410Q298 416 299 422Q301 428 305 434Q309 440 314 444Q320 448 328 450Q336 452 358 450Q380 448 384 450Q389 452 391 456Q393 460 393 464Q392 468 386 484Q380 500 372 510Q364 520 356 524Q348 528 338 528Q328 529 306 524Q284 519 272 519Q260 519 254 520Q248 522 242 525Q235 528 231 532Q227 536 226 540Q225 544 225 550Q226 556 231 566Q236 576 256 598Q277 620 281 630Q286 640 286 646Q285 652 283 656Q281 660 271 672Q260 684 257 690Q254 696 252 708Q251 720 254 730Q256 740 262 749Q268 757 276 761Q284 766 294 766Q304 767 316 763Q328 759 336 754Q344 750 352 743Q359 736 365 728Q371 720 375 710Q380 700 381 694Q382 688 382 682Q382 676 374 658Q367 640 368 634Q369 628 389 610Q409 592 436 578Q463 564 469 559Q476 554 480 549Q485 544 498 521Q512 497 532 479Q553 460 557 454Q562 448 563 444Q564 440 563 434Q563 428 552 402Q542 376 542 372Q542 368 544 364Q546 360 553 355Q560 351 576 346Q592 342 602 340Q612 339 628 339Q644 339 650 338Q656 336 660 334Q664 331 667 325Q669 320 670 314Q670 308 669 302Q668 296 666 292Q664 288 659 284Q655 280 647 279Q640 278 610 281Q580 284 570 284Q560 284 554 282Q548 280 543 274Q537 268 534 260Q532 252 532 246Q532 240 535 236Q538 232 551 224Q564 216 570 210Q576 204 580 196Q584 188 584 178Q585 168 581 156Q577 144 565 124Q554 104 547 100Q540 95 522 89Q504 82 498 77Q492 71 490 66Q488 60 487 54Q487 48 490 24L494 0M591 0Q596 19 600 20Q604 21 612 17Q620 12 623 6L626 0M711 0Q720 7 726 8Q732 9 738 7Q744 6 747 3L751 0M813 0Q811 8 809 12Q806 16 793 25Q780 34 776 38Q772 43 769 49Q766 56 765 64Q764 72 771 106Q779 140 783 152Q787 164 794 173Q800 181 804 184Q808 187 814 188Q820 189 826 187Q832 184 835 180Q838 176 845 148Q852 120 858 108Q864 95 872 88Q880 80 895 74Q910 68 915 64Q919 60 919 56Q919 52 913 38Q906 24 906 12L907 0M1146 0Q1145 32 1142 44Q1140 56 1124 90Q1108 124 1106 134Q1103 144 1105 152Q1107 160 1118 178Q1129 196 1134 206Q1139 216 1140 224Q1141 232 1138 238Q1135 244 1130 248Q1124 252 1104 263Q1084 273 1078 275Q1072 277 1068 276Q1064 276 1058 271Q1052 266 1046 257Q1040 248 1035 238Q1030 228 1024 210Q1017 192 1014 186Q1010 180 1005 176Q1000 173 994 171Q988 169 982 169Q976 169 972 171Q968 173 964 176Q961 180 959 184Q958 188 959 206Q961 224 960 228Q959 232 956 236Q953 240 949 242Q945 244 941 245Q936 246 916 244Q896 243 892 245Q888 247 886 249Q885 252 884 260Q883 268 886 292Q889 316 888 326Q888 336 879 360Q870 384 869 406Q867 428 865 434Q863 440 857 448Q850 456 826 474Q803 492 787 514Q771 536 763 541Q756 547 748 549Q740 551 732 551Q724 550 714 546Q704 542 697 537Q690 532 685 526Q681 520 679 514Q677 508 677 492Q677 476 672 469Q668 462 662 458Q656 453 650 451Q644 449 636 449Q628 449 622 451Q616 453 612 457Q608 460 607 464Q605 468 606 496Q606 524 599 550Q591 576 591 594Q591 612 586 632Q580 652 580 674Q579 696 577 702Q575 708 572 710Q568 712 562 712Q556 713 522 711Q488 709 482 710Q476 711 472 713Q468 715 464 720Q461 724 460 728Q459 732 458 756Q458 780 456 788Q455 796 449 802Q443 808 431 814Q420 820 410 823Q400 827 390 828Q380 830 354 826Q328 823 318 823Q308 824 300 826Q292 828 287 832Q282 836 281 838Q281 840 283 844Q284 848 296 861Q308 874 313 881Q317 888 328 910Q339 932 359 960Q380 987 402 1004Q424 1021 428 1028Q432 1034 434 1041L435 1048M1676 98Q1652 100 1636 103Q1620 106 1616 105Q1613 104 1611 102Q1610 100 1610 94Q1610 88 1623 60Q1635 32 1640 16L1644 0M0 217Q20 218 28 222Q36 226 45 237Q54 248 57 256Q60 264 58 270Q56 276 40 300Q25 324 18 329Q12 334 6 335L0 337M1676 333Q1668 326 1666 317Q1663 308 1665 302Q1666 296 1668 294Q1669 292 1673 291L1676 289M1676 670Q1660 672 1652 677Q1644 681 1639 686Q1634 692 1623 709Q1612 726 1606 730Q1600 733 1594 732Q1588 731 1576 723Q1563 716 1556 713Q1548 710 1522 706Q1496 703 1492 699Q1487 696 1481 682Q1474 668 1469 661Q1464 653 1442 635Q1420 617 1403 596Q1385 576 1381 566Q1377 556 1376 540Q1375 524 1373 520Q1372 516 1368 513Q1364 511 1330 496Q1296 482 1280 468Q1264 455 1254 453Q1244 451 1238 451Q1232 452 1226 455Q1220 457 1208 466Q1196 475 1180 491Q1164 507 1156 510Q1148 514 1138 513Q1128 512 1116 508Q1105 504 1101 500Q1097 496 1096 490Q1095 484 1097 476Q1099 468 1103 460Q1107 452 1111 447Q1116 441 1122 437Q1128 433 1141 428Q1154 424 1181 420Q1208 416 1226 406Q1244 397 1248 396Q1252 395 1256 396Q1260 398 1268 405Q1276 412 1282 414Q1288 417 1312 413Q1336 409 1344 411Q1352 412 1358 415Q1364 418 1371 425Q1378 432 1383 440Q1387 448 1389 456Q1390 464 1391 482Q1392 501 1396 503Q1400 505 1410 505Q1420 505 1426 503Q1432 501 1436 499Q1440 496 1442 492Q1444 488 1449 468Q1453 448 1457 442Q1461 436 1467 432Q1472 428 1480 426Q1488 424 1498 424Q1508 424 1534 429Q1560 435 1566 436Q1572 436 1576 435Q1580 433 1590 423Q1600 412 1604 410Q1608 408 1612 407Q1616 407 1618 408Q1620 409 1622 413Q1624 416 1623 424Q1622 432 1619 436Q1616 440 1605 446Q1593 452 1591 456Q1588 460 1588 470Q1588 480 1591 490Q1595 500 1603 512Q1611 524 1620 530Q1628 537 1636 538Q1644 540 1660 537L1676 534M774 1048Q773 1020 771 1012Q769 1004 765 996Q760 989 754 984Q748 980 740 980Q732 980 710 991Q688 1002 682 1003Q676 1005 672 1005Q668 1004 665 998Q662 992 660 980Q658 968 658 958Q658 948 660 940Q662 932 674 900Q685 868 690 862Q695 856 703 850Q712 844 722 841Q732 837 742 837Q752 836 762 837Q772 839 792 843Q812 848 818 848Q824 848 830 845Q836 843 844 836Q851 828 857 818Q862 808 866 792Q870 776 873 772Q876 768 886 760Q896 753 902 746Q908 739 915 728Q921 716 925 704Q928 692 928 686Q928 680 925 674Q922 668 917 662Q911 656 896 644Q882 632 879 626Q875 620 876 614Q876 608 880 600Q884 592 890 585Q896 579 904 574Q912 570 920 569Q928 567 958 573Q988 579 996 582Q1004 585 1011 590Q1018 596 1031 614Q1045 632 1055 639Q1064 645 1074 650Q1084 655 1094 655Q1104 655 1124 650Q1144 645 1152 642Q1160 639 1172 631Q1184 624 1190 621Q1196 619 1202 619Q1208 619 1211 622Q1214 624 1215 628Q1216 632 1215 636Q1214 640 1209 650Q1204 660 1197 668Q1189 676 1169 694Q1148 711 1140 716Q1132 720 1126 720Q1120 721 1106 711Q1092 701 1086 700Q1080 699 1076 701Q1073 704 1071 708Q1069 712 1068 722Q1067 732 1068 738Q1070 744 1073 747Q1076 750 1080 751Q1084 752 1096 750Q1108 749 1114 752Q1120 755 1126 764Q1132 773 1144 801Q1156 829 1160 835Q1164 841 1168 845Q1172 849 1176 851Q1180 853 1186 855Q1192 856 1216 857Q1240 857 1244 859Q1248 860 1253 864Q1259 868 1263 876Q1267 884 1267 894Q1268 904 1265 914Q1261 924 1255 932Q1248 940 1240 943Q1232 946 1224 946Q1216 945 1208 942Q1200 939 1174 927Q1148 914 1111 909Q1074 904 1069 900Q1064 896 1054 876Q1044 856 1040 852Q1036 847 1028 842Q1020 837 1002 829Q984 821 972 817Q960 814 950 815Q940 815 937 818Q933 820 932 822Q931 824 931 830Q931 836 936 868Q941 900 943 908Q945 916 953 934Q961 952 962 968Q962 984 964 988Q966 992 971 994Q976 996 982 995Q988 994 1008 985Q1028 976 1034 974Q1040 973 1046 973Q1052 974 1066 977Q1080 981 1086 983Q1092 986 1098 990Q1104 995 1121 1015Q1138 1036 1141 1042L1144 1048M0 626Q17 628 24 631Q32 634 38 640Q44 646 48 655Q53 664 54 672Q55 680 54 686Q53 692 41 710Q30 728 27 738Q23 748 24 756Q25 764 33 782Q41 800 43 806Q44 812 40 830Q37 848 37 856Q37 864 40 872Q43 880 47 886Q52 892 58 896Q64 900 76 904Q88 908 92 911Q96 914 114 935Q132 956 140 968Q148 980 150 986Q152 992 153 998Q153 1004 151 1008Q150 1012 141 1024Q133 1036 131 1042L129 1048M823 743Q820 746 812 747Q804 747 796 743Q788 739 784 734Q781 728 781 724Q781 720 782 717Q784 714 790 711Q796 709 800 709Q804 710 809 713Q814 716 819 724Q825 732 825 736Q825 740 823 743ZM648 767Q644 768 636 768Q628 768 620 764Q613 760 609 754Q605 748 605 744Q605 740 607 738Q608 737 612 735Q616 734 624 735Q632 735 638 737Q644 738 649 741Q655 744 657 748Q660 752 659 756Q658 760 655 763Q652 765 648 767ZM1676 951Q1652 947 1646 944Q1640 941 1636 937Q1632 934 1627 927Q1622 920 1616 908Q1610 896 1608 890Q1605 884 1604 878Q1603 872 1606 862Q1609 852 1612 847Q1616 841 1620 838Q1624 835 1632 834Q1640 832 1658 836L1676 840M69 1048Q62 1020 54 1008Q45 996 37 991Q28 985 14 983L0 980M630 1048Q636 1033 640 1029Q644 1026 648 1025Q652 1023 654 1023Q656 1024 658 1026Q660 1028 662 1038L663 1048M563 0Q563 32 562 42Q560 52 556 58Q552 65 548 67Q544 69 540 69Q536 70 527 67Q517 64 513 58Q508 52 507 44Q506 36 510 18L513 0M682 0Q688 8 694 12Q699 16 718 23Q736 30 740 33Q744 36 746 41Q748 46 749 61Q750 76 753 86Q755 96 764 128Q773 160 779 174Q784 187 788 194Q792 200 798 205Q804 211 822 219Q840 227 846 233Q852 238 859 251Q866 264 871 282Q875 300 874 312Q874 324 865 347Q856 370 853 397Q850 424 847 432Q844 440 839 446Q834 452 827 457Q820 462 795 473Q770 484 768 486Q767 488 764 498Q761 508 759 512Q756 516 752 520Q748 524 742 526Q736 528 730 528Q724 528 720 526Q716 525 712 522Q709 520 706 516Q704 513 703 506Q703 500 707 488Q711 476 711 474Q710 472 707 468Q704 464 688 453Q672 442 662 437Q652 432 644 431Q636 430 618 432Q600 434 594 432Q588 430 580 421Q573 412 568 400Q563 388 563 384Q563 380 565 376Q567 372 575 366Q583 360 589 358Q596 356 604 355Q612 354 632 358Q652 361 658 360Q664 359 672 354Q680 348 684 340Q688 332 689 322Q689 312 686 296Q684 281 682 274Q680 267 676 262Q672 256 664 254Q656 252 632 256Q608 259 596 260Q584 260 576 258Q569 256 567 252Q566 248 567 244Q569 240 579 228Q589 216 593 204Q598 192 599 180Q601 168 600 146Q598 124 601 120Q604 116 610 111Q616 106 617 103Q619 100 619 96Q619 92 616 80Q612 68 613 60Q613 52 617 46Q621 40 635 26Q649 12 652 6L655 0M1137 0Q1132 40 1126 58Q1119 76 1107 94Q1096 112 1076 133Q1056 154 1054 156Q1052 158 1048 159Q1044 160 1016 155Q988 149 980 150Q972 150 966 152Q960 154 953 159Q946 164 942 170Q937 176 936 182Q934 188 933 200Q932 212 930 214Q928 217 922 218Q916 219 900 214Q884 210 877 205Q870 200 866 192Q862 184 861 168Q860 152 863 138Q866 124 869 118Q872 112 876 108Q880 104 888 100Q896 96 920 91Q944 85 949 83Q954 80 957 76Q961 72 962 68Q963 64 961 58Q959 52 947 36Q935 20 931 10L928 0M1676 75Q1660 72 1658 70Q1656 68 1654 64Q1653 60 1654 56Q1654 52 1657 46Q1660 41 1664 37Q1668 33 1672 31L1676 30M376 196Q364 208 358 209Q352 210 344 208Q336 206 324 201Q312 196 302 190Q293 184 286 178Q279 172 275 166Q271 160 271 156Q270 152 272 148Q273 144 289 130Q304 116 311 112Q318 108 325 106Q332 104 340 103Q348 102 384 103Q420 104 426 105Q432 106 438 109Q443 112 448 118Q452 123 454 130Q456 136 457 144Q457 152 454 158Q452 164 448 166Q444 169 428 170Q412 172 406 174Q400 176 394 180Q388 184 376 196ZM1094 238Q1088 244 1084 245Q1080 247 1076 246Q1072 246 1068 243Q1064 240 1062 236Q1059 232 1057 224Q1054 216 1053 208Q1053 200 1054 194Q1055 188 1057 185Q1060 182 1064 182Q1068 183 1074 186Q1080 190 1086 196Q1092 201 1096 207Q1099 212 1101 218Q1102 224 1101 228Q1100 232 1094 238ZM164 271Q152 276 146 276Q140 276 134 273Q128 270 126 265Q123 260 125 254Q126 248 132 240Q138 232 147 224Q156 217 164 213Q172 210 178 211Q184 211 188 215Q192 218 194 223Q196 228 196 234Q196 240 195 244Q193 248 191 252Q188 256 182 261Q176 266 164 271ZM392 287Q388 288 384 289Q380 289 376 287Q372 286 369 281Q365 276 364 270Q364 264 365 258Q366 252 368 248Q370 244 373 242Q376 240 380 240Q384 240 388 242Q392 245 396 249Q400 252 403 258Q405 264 405 268Q406 272 404 276Q402 280 399 283Q396 286 392 287ZM0 246Q8 244 12 245Q16 246 18 248Q20 250 21 253Q22 256 21 260Q20 264 18 266Q16 268 12 269Q8 270 4 268L0 267M1160 480Q1152 485 1144 486Q1136 486 1131 483Q1126 480 1125 474Q1123 468 1125 461Q1128 455 1134 449Q1139 444 1148 441Q1156 437 1164 437Q1172 436 1179 438Q1185 440 1187 444Q1188 448 1186 454Q1183 460 1175 468Q1168 476 1160 480ZM1356 475Q1352 477 1344 476Q1336 475 1328 469Q1321 464 1319 458Q1317 452 1320 446Q1324 440 1328 438Q1332 436 1338 435Q1344 435 1348 436Q1352 438 1356 441Q1359 444 1362 449Q1364 454 1364 459Q1364 464 1362 468Q1360 472 1356 475ZM338 511Q332 512 310 507Q288 503 253 501Q219 500 211 496Q204 492 201 488Q199 484 199 480Q199 476 204 470Q210 464 225 455Q240 446 250 442Q260 438 266 438Q272 439 276 441Q280 443 294 455Q308 467 314 469Q320 471 334 472Q348 473 354 476Q360 479 361 483Q362 488 359 495Q356 502 350 506Q344 510 338 511ZM1676 658Q1656 660 1648 662Q1640 665 1634 670Q1628 675 1618 687Q1608 699 1602 702Q1596 705 1590 704Q1584 703 1570 698Q1556 692 1536 688Q1516 683 1508 678Q1500 673 1485 657Q1471 640 1448 620Q1426 600 1417 588Q1408 576 1405 566Q1402 556 1402 552Q1403 548 1405 543Q1408 539 1412 536Q1416 533 1422 531Q1428 528 1439 528Q1450 528 1467 534Q1484 541 1490 540Q1496 539 1497 538Q1498 536 1497 532Q1496 528 1488 520Q1480 511 1475 504Q1471 496 1468 488Q1466 480 1466 474Q1466 468 1467 462Q1468 456 1472 450Q1476 445 1482 441Q1488 438 1494 437Q1500 436 1508 438Q1516 439 1524 442Q1532 446 1539 451Q1546 456 1552 462Q1557 468 1590 518Q1622 568 1624 576Q1625 584 1620 592Q1616 600 1618 600Q1620 600 1623 594Q1627 588 1632 584Q1638 580 1657 571L1676 561M126 462Q124 465 120 465Q116 466 112 464Q108 463 106 459Q103 456 104 452Q105 448 109 446Q112 445 118 448Q124 451 126 455Q128 460 126 462ZM396 815Q388 816 376 816Q364 816 349 812Q333 808 324 804Q315 800 313 796Q310 792 313 788Q316 784 339 766Q363 748 388 720Q413 692 415 686Q417 680 416 666Q415 652 416 644Q416 636 419 628Q421 620 425 614Q428 608 434 602Q440 597 446 594Q452 590 474 583Q496 576 499 572Q502 568 508 546Q515 524 521 514Q527 504 534 498Q540 491 548 486Q556 481 562 479Q568 477 572 478Q576 479 579 482Q581 484 584 490Q587 496 589 508Q590 520 589 526Q587 532 584 540Q580 549 565 568Q550 588 548 592Q547 596 551 608Q556 620 558 628Q559 636 559 650Q559 664 557 672Q555 680 551 684Q548 688 540 691Q532 694 500 693Q468 691 460 692Q452 693 446 696Q440 699 439 701Q437 704 437 708Q437 712 440 738Q443 764 441 774Q439 784 435 790Q431 796 426 800Q420 805 412 809Q404 813 396 815ZM950 643Q944 644 932 640Q920 636 914 632Q908 629 904 624Q900 620 898 616Q897 612 898 606Q899 600 901 596Q904 592 908 589Q912 586 918 584Q924 582 932 583Q940 584 955 590Q970 596 977 602Q984 608 985 612Q985 616 980 622Q976 628 966 635Q956 642 950 643ZM214 614Q212 616 204 618Q196 620 190 617Q184 614 182 609Q179 604 182 598Q184 592 190 588Q196 585 202 587Q208 589 212 597Q217 604 216 608Q216 612 214 614ZM0 639Q16 642 22 646Q28 650 33 657Q38 664 40 670Q41 676 41 680Q41 684 39 690Q37 696 24 716Q10 736 7 742Q4 748 5 754Q6 760 13 776Q20 792 21 798Q23 804 22 812Q22 820 18 836Q14 852 15 862Q17 872 24 886Q31 900 39 910Q48 920 54 924Q60 928 76 935Q92 941 102 949Q112 956 119 966Q125 976 126 984Q128 992 123 1002Q119 1012 109 1024Q100 1036 96 1039Q92 1042 76 1019Q61 996 54 989Q48 983 38 978Q28 973 14 972L0 971M249 794Q244 797 232 797Q220 797 208 794Q196 791 190 787Q184 783 179 775Q175 768 171 754Q167 740 168 728Q168 716 174 706Q179 696 187 690Q196 683 202 682Q208 680 212 681Q216 682 220 684Q224 687 227 692Q229 696 235 722Q241 748 249 766Q257 784 256 788Q255 792 249 794ZM1136 880Q1132 881 1122 882Q1112 883 1102 881Q1092 878 1086 874Q1080 870 1069 855Q1059 840 1051 834Q1044 828 1014 815Q984 803 960 796Q936 788 930 784Q924 780 921 774Q919 768 920 760Q921 752 929 735Q936 719 944 706Q952 694 958 690Q964 686 970 686Q976 686 990 689Q1004 692 1014 696Q1023 700 1028 704Q1032 708 1035 714Q1038 720 1040 744Q1042 768 1044 774Q1046 780 1049 784Q1052 788 1056 790Q1060 793 1064 793Q1068 794 1086 790Q1104 786 1108 787Q1112 788 1116 791Q1120 795 1126 805Q1132 816 1140 838Q1148 860 1147 866Q1147 872 1143 875Q1140 878 1136 880ZM788 1048Q787 1016 786 1008Q784 1000 781 992Q777 984 772 978Q767 972 760 966Q752 960 744 958Q736 955 730 956Q724 957 712 965Q700 973 696 974Q692 975 688 974Q684 973 681 971Q678 968 677 964Q675 960 675 954Q675 948 677 944Q678 940 681 935Q684 930 694 919Q704 908 711 890Q717 872 720 868Q723 864 727 860Q732 856 740 853Q748 850 758 850Q768 850 794 859Q820 867 826 868Q832 868 838 866Q844 863 858 850Q872 837 880 834Q888 830 894 832Q900 834 904 837Q908 840 913 846Q918 852 921 860Q924 868 928 890Q931 912 936 932Q942 952 939 976Q936 1000 939 1008Q941 1016 944 1018Q948 1021 954 1021Q960 1021 992 1013Q1024 1004 1032 1003Q1040 1003 1048 1003Q1056 1004 1066 1007Q1076 1010 1084 1014Q1092 1019 1098 1025Q1105 1032 1108 1040L1112 1048M193 861Q192 863 187 861Q182 860 180 858Q178 856 177 854Q177 852 178 851Q180 850 184 851Q188 852 192 856Q195 860 193 861ZM1676 930Q1656 925 1650 921Q1644 916 1639 908Q1635 900 1632 890Q1630 880 1631 874Q1632 868 1636 863Q1640 858 1646 856Q1652 854 1664 855L1676 855M192 1048Q197 1024 204 1014Q210 1004 219 998Q228 991 244 986Q259 980 262 978Q264 976 264 972Q264 968 252 948Q241 928 231 904Q222 880 222 878Q223 876 226 874Q229 872 245 869Q260 867 270 869Q280 871 286 875Q292 879 296 883Q300 887 304 894Q308 901 312 916Q316 932 319 938Q322 944 335 957Q348 970 360 989Q372 1008 388 1019Q404 1029 408 1034Q412 1039 413 1043L415 1048M1234 921Q1228 924 1220 923Q1212 921 1204 916Q1196 910 1192 903Q1187 896 1188 892Q1188 888 1189 886Q1190 884 1197 880Q1204 877 1212 875Q1220 874 1226 874Q1232 874 1237 877Q1242 880 1246 886Q1249 892 1248 900Q1247 908 1244 913Q1240 919 1234 921ZM1128 0Q1124 32 1119 48Q1113 64 1105 78Q1096 92 1086 101Q1076 110 1064 117Q1052 123 1040 127Q1028 130 1020 130Q1012 130 992 127Q972 123 968 124Q964 124 956 129Q948 134 930 150Q912 167 906 169Q900 172 896 171Q892 170 888 167Q884 163 881 156Q879 148 879 142Q880 136 884 129Q888 122 892 119Q896 116 904 114Q912 112 934 112Q956 113 962 112Q968 110 976 103Q984 95 988 88Q992 80 993 70Q995 60 992 52Q990 44 987 40Q984 36 971 24Q957 12 954 6L950 0M810 450Q804 452 796 453Q788 453 770 449Q752 445 730 443Q708 441 695 434Q682 428 667 415Q652 402 636 407Q620 412 614 413Q608 413 600 411Q593 408 588 402Q584 396 584 392Q583 388 585 384Q586 380 589 377Q592 375 598 373Q604 371 614 372Q624 374 638 383Q652 393 656 392Q660 391 668 385Q676 379 684 370Q692 362 696 355Q701 348 703 342Q705 336 705 330Q705 324 703 306Q700 288 699 272Q698 256 695 247Q692 238 688 235Q684 231 678 228Q672 226 666 225Q660 225 648 226Q636 228 630 227Q624 226 622 225Q620 224 618 220Q616 216 616 206Q617 196 620 182Q624 168 628 163Q632 157 641 149Q650 140 653 132Q655 124 654 114Q652 104 644 86Q636 68 635 62Q635 56 637 52Q639 48 643 44Q647 40 657 34Q668 28 674 27Q680 27 690 30Q700 33 709 36Q717 40 723 44Q728 49 731 54Q734 60 738 82Q743 104 751 129Q760 155 767 181Q774 208 777 214Q779 220 782 224Q786 228 791 232Q796 236 812 242Q828 248 834 252Q840 255 846 261Q852 268 856 276Q860 284 861 292Q863 300 863 306Q862 312 861 318Q859 324 850 344Q841 364 838 394Q834 424 829 433Q824 441 820 444Q816 447 810 450ZM360 176Q352 181 348 182Q344 183 338 183Q332 183 328 181Q324 180 319 176Q314 172 311 168Q309 164 308 160Q307 156 310 148Q313 140 320 134Q326 128 335 125Q344 121 356 122Q368 123 378 128Q388 132 390 136Q391 140 389 144Q387 148 378 159Q368 170 360 176ZM1584 666Q1580 668 1558 669Q1536 670 1530 669Q1524 667 1518 665Q1512 662 1504 655Q1496 648 1470 620Q1444 592 1437 582Q1431 572 1431 566Q1431 560 1433 558Q1435 556 1437 555Q1440 555 1444 555Q1448 556 1462 562Q1476 568 1484 570Q1492 571 1504 569Q1516 567 1520 565Q1524 563 1528 560Q1532 556 1534 546Q1537 536 1535 526Q1533 516 1530 512Q1526 508 1511 500Q1496 492 1491 486Q1487 480 1486 476Q1485 472 1486 468Q1486 464 1491 459Q1496 455 1504 455Q1512 456 1518 460Q1525 464 1530 470Q1534 476 1541 488Q1547 500 1559 512Q1572 523 1579 534Q1586 544 1587 553Q1588 561 1582 573Q1576 584 1574 590Q1573 596 1574 607Q1576 617 1583 637Q1589 656 1588 660Q1588 664 1584 666ZM553 542Q548 544 544 542Q539 540 539 536Q538 532 539 528Q540 524 544 519Q548 514 554 512Q560 510 563 513Q566 516 566 522Q565 528 561 534Q557 540 553 542ZM1676 641Q1660 637 1657 635Q1655 632 1655 630Q1654 628 1657 622Q1660 616 1664 612Q1668 609 1672 608L1676 606M520 665Q516 668 496 668Q476 667 466 664Q456 662 453 659Q449 656 447 652Q445 648 445 642Q445 636 446 631Q448 627 451 623Q454 620 457 618Q460 617 464 616Q468 616 472 617Q476 618 488 628Q500 638 511 645Q522 652 523 654Q524 656 524 659Q524 663 520 665ZM0 653Q8 655 12 657Q17 660 20 664Q23 668 25 674Q26 680 25 686Q24 692 22 696Q20 700 14 706Q8 712 4 713L0 715M215 758Q212 761 208 761Q204 761 200 760Q196 758 192 754Q188 750 185 745Q183 740 182 734Q181 728 182 724Q183 720 185 715Q188 711 192 708Q196 706 200 706Q204 706 207 707Q209 708 212 712Q216 716 217 720Q219 724 220 736Q220 748 219 752Q218 756 215 758ZM1002 782Q996 784 988 783Q980 783 970 780Q960 777 954 773Q948 770 945 765Q942 760 941 754Q941 748 944 740Q946 732 951 725Q956 718 962 714Q968 709 974 708Q980 707 988 709Q996 710 1002 713Q1008 716 1013 722Q1018 728 1019 736Q1021 744 1018 756Q1016 768 1012 774Q1008 780 1002 782ZM402 798Q396 801 388 802Q380 803 371 802Q362 800 356 796Q350 792 349 788Q349 784 354 776Q359 768 374 754Q388 741 394 737Q400 733 406 733Q412 732 416 735Q420 738 422 743Q425 748 426 754Q427 760 426 766Q426 772 421 781Q416 789 412 793Q407 796 402 798ZM804 1048Q804 1012 802 1002Q800 992 797 986Q794 980 789 974Q785 968 767 952Q749 936 744 930Q739 924 736 914Q733 904 733 898Q734 892 735 886Q737 880 740 876Q743 872 747 869Q752 866 762 865Q772 865 784 869Q796 873 814 884Q832 895 838 897Q844 898 848 896Q852 894 862 879Q873 864 876 861Q880 858 884 857Q888 856 892 857Q896 857 900 860Q904 862 908 869Q912 876 914 884Q916 892 918 924Q920 956 918 970Q916 984 906 1008Q897 1032 895 1040L893 1048M1676 907Q1668 905 1665 903Q1661 900 1659 894Q1657 888 1659 884Q1661 880 1664 878Q1668 876 1672 876L1676 876M286 926Q284 929 278 929Q272 930 266 925Q260 920 258 912Q255 904 256 900Q258 896 260 894Q263 892 269 892Q276 891 282 896Q288 901 290 909Q291 916 290 920Q289 924 286 926ZM0 899Q8 903 13 910Q18 916 23 924Q28 932 30 938Q32 944 31 946Q31 948 27 951Q24 954 12 956L0 958M94 991Q92 992 88 991Q84 989 81 985Q77 980 76 976Q76 972 78 970Q80 968 84 969Q88 970 92 973Q96 976 97 980Q98 984 97 987Q96 990 94 991ZM211 1048Q213 1036 216 1029Q220 1023 226 1018Q232 1014 238 1013Q244 1012 250 1013Q256 1015 262 1019Q268 1023 272 1029Q276 1036 277 1042L279 1048M973 1048Q978 1040 985 1035Q992 1031 1002 1028Q1012 1024 1022 1023Q1032 1022 1040 1023Q1048 1024 1056 1027Q1064 1030 1069 1035Q1074 1040 1076 1044L1077 1048M1118 0Q1116 20 1114 30Q1111 40 1107 50Q1103 60 1099 68Q1094 76 1089 81Q1084 87 1078 91Q1072 96 1064 99Q1056 103 1048 104Q1040 105 1036 105Q1032 104 1028 102Q1025 100 1022 94Q1019 88 1018 44L1018 0M806 430Q800 433 794 433Q788 434 772 430Q756 427 736 425Q716 424 708 420Q700 416 696 410Q693 404 694 396Q695 388 705 372Q715 356 719 348Q722 340 722 332Q722 324 718 304Q715 284 715 276Q716 269 720 254Q723 240 721 234Q718 228 701 214Q685 200 679 192Q673 184 673 178Q673 172 677 156Q681 140 682 134Q682 128 673 106Q665 84 663 76Q661 68 663 62Q664 56 670 52Q676 48 682 47Q688 46 696 49Q704 51 708 54Q712 56 716 62Q720 68 724 92Q729 116 737 134Q746 152 749 162Q752 172 753 184Q754 196 751 210Q748 224 750 230Q751 236 760 244Q768 252 776 257Q784 262 802 265Q820 267 826 269Q832 272 837 276Q841 280 844 286Q847 292 847 302Q847 312 838 328Q829 344 827 352Q824 360 823 380Q822 400 820 408Q819 416 815 421Q812 427 806 430ZM1549 644Q1544 648 1540 649Q1536 650 1530 649Q1524 648 1516 643Q1508 638 1500 627Q1492 616 1490 612Q1489 608 1491 604Q1492 599 1498 596Q1504 593 1512 591Q1520 590 1527 591Q1533 592 1539 596Q1544 599 1548 606Q1552 612 1554 620Q1555 628 1554 634Q1553 640 1549 644ZM991 752Q988 756 982 757Q976 758 972 755Q967 752 966 748Q965 744 969 739Q972 734 978 732Q984 731 988 733Q992 736 993 742Q995 748 991 752ZM823 958Q820 960 814 959Q808 957 800 953Q792 948 778 936Q764 924 760 918Q757 912 756 908Q755 904 755 898Q756 892 758 889Q760 887 764 885Q768 883 774 883Q781 884 788 888Q796 892 802 898Q808 904 815 914Q821 924 824 932Q827 940 826 948Q826 956 823 958ZM1105 0Q1100 35 1095 47Q1089 60 1082 68Q1074 76 1069 79Q1064 81 1060 82Q1056 82 1052 81Q1048 81 1045 78Q1043 76 1040 68Q1037 60 1038 50Q1038 40 1041 20L1045 0M728 189Q724 192 718 191Q712 189 708 183Q704 176 704 172Q704 168 706 164Q708 160 712 157Q716 154 719 155Q723 156 725 158Q728 160 730 166Q733 172 733 179Q732 186 728 189ZM791 402Q788 404 782 405Q776 406 758 405Q740 404 734 402Q728 400 726 398Q724 396 723 392Q723 388 724 384Q726 380 738 364Q750 348 752 342Q755 336 755 330Q754 324 748 310Q741 296 741 292Q741 288 742 286Q744 284 746 283Q748 283 752 285Q756 287 764 296Q772 304 776 307Q780 310 786 311Q792 312 800 310Q809 308 809 310Q809 312 803 320Q796 328 794 334Q791 340 791 346Q791 352 794 370Q797 388 795 394Q793 400 791 402Z"/><path d="M791 0 Q798 18 797 24 Q790 40 775 60 Q795 40 803 34 Q830 50 880 80 Q835 40 806 22 Q810 14 819 8 Q806 16 801 17 Q797 10 793 0Z M628 55 a3.6 4 0 1 0 7.2 0 a3.6 4 0 1 0 -7.2 0Z M268 148 Q276 160 282 180 Q288 160 296 150 Q284 156 268 148Z" fill="#fff" fill-opacity=".75" stroke="none"/></svg><svg style="left:0;top:0" width="1680" height="1050" viewBox="0 0 1680 1050" fill="none" stroke-linecap="round" stroke-linejoin="round">
<defs>
<linearGradient id="sw1" gradientUnits="userSpaceOnUse" x1="0" y1="0" x2="380" y2="0"><stop offset="0" stop-color="#1c3f73"/><stop offset=".5" stop-color="#1e4f8f"/><stop offset="1" stop-color="#2462ad"/></linearGradient>
<linearGradient id="sw2" gradientUnits="userSpaceOnUse" x1="150" y1="0" x2="1300" y2="0"><stop offset="0" stop-color="#182c52"/><stop offset=".22" stop-color="#1c4680"/><stop offset=".5" stop-color="#1e4f8f"/><stop offset="1" stop-color="#1d4a86"/></linearGradient>
<linearGradient id="sw3" gradientUnits="userSpaceOnUse" x1="500" y1="0" x2="1300" y2="0"><stop offset="0" stop-color="#172a4e"/><stop offset=".3" stop-color="#1b3f74"/><stop offset="1" stop-color="#1d4a86"/></linearGradient>
<linearGradient id="sw4" gradientUnits="userSpaceOnUse" x1="1090" y1="0" x2="1680" y2="0"><stop offset="0" stop-color="#172848"/><stop offset=".4" stop-color="#1a3a6a"/><stop offset="1" stop-color="#1c4278"/></linearGradient>
</defs>
<path d="M-5 942 C60 912 120 887 225 845 C290 822 340 818 370 821 C376 826 366 834 350 842 C300 862 200 895 125 922 C70 942 30 955 -5 969" stroke="url(#sw1)" stroke-width="3.6"/>
<path d="M150 1001 C260 982 360 966 450 952 C520 942 600 934 650 931 C664 931 662 936 655 940 C668 942 690 938 700 935 C760 924 800 917 840 908 C900 895 950 884 990 877 C1050 867 1100 861 1140 857 C1200 851 1260 849 1295 851" stroke="url(#sw2)" stroke-width="3.4"/>
<path d="M1295 851 C1300 855 1285 866 1265 875 C1240 884 1215 890 1190 895 C1140 905 1090 915 1040 925 C960 938 900 946 840 955 C720 972 600 987 500 1001" stroke="url(#sw3)" stroke-width="3"/>
<path d="M1090 1001 C1250 980 1480 955 1685 936" stroke-width="2.8" stroke="url(#sw4)"/>
</svg><svg style="left:18px;top:8px" width="40" height="46" viewBox="0 0 40 46">
<defs><linearGradient id="rb1" x1="0" y1="0" x2="1" y2="0"><stop offset="0" stop-color="#c9cdd3"/><stop offset=".5" stop-color="#e3e6ea"/><stop offset="1" stop-color="#c3c8cf"/></linearGradient>
<linearGradient id="rb2" x1="0" y1="0" x2="0" y2="1"><stop offset="0" stop-color="#aeb4bc"/><stop offset="1" stop-color="#d5d9de"/></linearGradient></defs>
<path d="M2 4.6 L38 4.6 L33.4 43.6 Q33.2 44.6 32 44.6 L8 44.6 Q6.8 44.6 6.6 43.6Z" fill="url(#rb1)" opacity=".96"/>
<path d="M2 4.6 L5.4 1.6 H34.6 L38 4.6Z" fill="url(#rb2)"/><path d="M4.4 4.4 L6.4 2.6 H33.6 L35.6 4.4Z" fill="#8d949d"/>
<path d="M2 4.6 H38 L37.8 6 H2.2Z" fill="#f2f4f6"/>
<g transform="translate(19.5,24.6) scale(.92)"><g transform="rotate(0)"><path d="M-3.62 -4.73 L-1.33 -8.69 Q-0.6 -10 0 -10.2" stroke="#0f6cc6" stroke-width="4.4" fill="none"/><path d="M-0.4 -10.2 Q0.8 -10 1.33 -8.69 L2.67 -6.38" stroke="#2499ee" stroke-width="4.4" fill="none"/><path d="M6.4 -8.5 L-1 -4.2 L4.96 -2.1Z" fill="#2499ee"/></g><g transform="rotate(120)"><path d="M-3.62 -4.73 L-1.33 -8.69 Q-0.6 -10 0 -10.2" stroke="#0f6cc6" stroke-width="4.4" fill="none"/><path d="M-0.4 -10.2 Q0.8 -10 1.33 -8.69 L2.67 -6.38" stroke="#2ea6f6" stroke-width="4.4" fill="none"/><path d="M6.4 -8.5 L-1 -4.2 L4.96 -2.1Z" fill="#2ea6f6"/></g><g transform="rotate(240)"><path d="M-3.62 -4.73 L-1.33 -8.69 Q-0.6 -10 0 -10.2" stroke="#0f6cc6" stroke-width="4.4" fill="none"/><path d="M-0.4 -10.2 Q0.8 -10 1.33 -8.69 L2.67 -6.38" stroke="#1f90e8" stroke-width="4.4" fill="none"/><path d="M6.4 -8.5 L-1 -4.2 L4.96 -2.1Z" fill="#1f90e8"/></g></g>
</svg><span class="t sh" style="font-size:12px;color:#ffffff;left:15.7px;top:59.642px;transform:scaleX(0.9843);">Корзина</span><div class="a" style="left:1px;top:104px;width:74px;height:83px;box-sizing:border-box;border:1px dotted #e8ecf2;background:rgba(60,110,180,.10);"></div><svg style="left:16.4px;top:110px" width="44" height="36" viewBox="0 0 44 36">
<defs><linearGradient id="fb110" x1="0" y1="0" x2="0" y2="1"><stop offset="0" stop-color="#fbd870"/><stop offset="1" stop-color="#f8c23c"/></linearGradient></defs>
<path d="M0.6 3.4 Q0.6 1 3 1 H13.6 Q15 1 16 2 L19.4 5.6 H40.4 Q42.8 5.6 42.8 8 V31 Q42.8 33.8 40.4 33.8 H3 Q0.6 33.8 0.6 31Z" fill="#f2b62a"/>
<path d="M0.6 3.4 Q0.6 1 3 1 H13.6 Q15 1 16 2 L19.4 5.6 H3 Q0.6 5.6 0.6 8Z" fill="#f8c632"/>
<rect x="0.6" y="6.6" width="42.2" height="15" fill="#fbd97a"/><circle cx="16.6" cy="17.4" r="5.4" fill="#f4f1ee"/><path d="M14 12.4 L20.6 18.4" stroke="#e2581e" stroke-width="2.2"/><circle cx="28.2" cy="13.2" r="5.6" fill="#1fa83a"/><path d="M28.2 9.6 V14.4 M25.4 13 L28.2 16.2 L31 13" stroke="#fff" stroke-width="1.8" fill="none"/>
<path d="M0.6 21.6 Q0.6 19.6 3 19.6 H40.4 Q42.8 19.6 42.8 21.6 V31.4 Q42.8 33.8 40.4 33.8 H3 Q0.6 33.8 0.6 31.4Z" fill="url(#fb110)"/>
<path d="M0.6 31.4 Q0.6 33.8 3 33.8 H40.4 Q42.8 33.8 42.8 31.4 V30.4 Q42.8 32.8 40.4 32.8 H3 Q0.6 32.8 0.6 30.4Z" fill="#e9a91e"/>
</svg><span class="t sh" style="font-size:12px;color:#ffffff;left:17.6px;top:157.842px;transform:scaleX(0.9406);">Browser</span><span class="t sh" style="font-size:12px;color:#ffffff;left:22.4px;top:172.642px;transform:scaleX(0.9726);">Install</span><svg style="left:16.2px;top:208.4px" width="44" height="36" viewBox="0 0 44 36">
<defs><linearGradient id="af1" x1="0" y1="0" x2="1" y2="1"><stop offset="0" stop-color="#fbd568"/><stop offset="1" stop-color="#f9c33e"/></linearGradient></defs>
<path d="M0.6 3.4 Q0.6 1 3 1 H13.6 Q15 1 16 2 L19.4 5.6 H3 Q0.6 5.6 0.6 8Z" fill="#f1b128"/>
<path d="M0.6 7 Q0.6 4.6 3 4.6 H17 L20 5.6 H40.4 Q42.8 5.6 42.8 8 V31 Q42.8 33.8 40.4 33.8 H3 Q0.6 33.8 0.6 31Z" fill="url(#af1)"/>
<path d="M19.6 10.6 H24.6 L33 26.2 H12.4 L14.6 22.2 H26.2 L22.2 14.8 L19.8 19 H15.4Z" fill="#b98a16"/>
<path d="M0.6 31.4 Q0.6 33.8 3 33.8 H40.4 Q42.8 33.8 42.8 31.4 V30.4 Q42.8 32.8 40.4 32.8 H3 Q0.6 32.8 0.6 30.4Z" fill="#e9a91e"/>
</svg><svg style="left:14px;top:238px" width="13" height="13" viewBox="0 0 13 13"><rect x="0" y="0" width="13" height="13" rx="1" fill="#f6f8fa"/><path d="M3.2 9.8 L9.2 3.8 M4.8 3.4 H9.6 V8.2" stroke="#1f6fd0" stroke-width="1.7" fill="none"/></svg><span class="t sh" style="font-size:12px;color:#ffffff;left:25.4px;top:255.542px;transform:scaleX(0.9742);">Atlas</span><svg style="left:14px;top:304px" width="48" height="46" viewBox="0 0 48 46">
<defs><linearGradient id="tb1" x1="0" y1="0" x2="1" y2="0"><stop offset="0" stop-color="#2b66c4"/><stop offset="1" stop-color="#1b3f8c"/></linearGradient>
<linearGradient id="tb2" x1="0" y1="0" x2="1" y2="1"><stop offset="0" stop-color="#3b8ae6"/><stop offset="1" stop-color="#1f63c4"/></linearGradient></defs>
<path d="M15 8 V4 Q15 2 17 2 H31 Q33 2 33 4 V8" stroke="#1d2d4a" stroke-width="2" fill="none" opacity=".7"/>
<path d="M0.4 11 Q0.4 8 3.4 8 H44.6 Q47.6 8 47.6 11 V22 H0.4Z" fill="url(#tb1)"/>
<path d="M0.4 22 H47.6 V40 Q47.6 43 44.6 43 H3.4 Q0.4 43 0.4 40Z" fill="url(#tb2)"/>
<path d="M0.4 20.6 H47.6" stroke="#0f1e3c" stroke-width="1.2"/>
<ellipse cx="8.4" cy="20" rx="1.6" ry="3" fill="#0f1e3c"/><ellipse cx="39.6" cy="20" rx="1.6" ry="3" fill="#0f1e3c"/>
<path d="M24 12 L30.6 23.4 H17.4Z" fill="#fff"/><path d="M14.6 30.4 L17 26.4 H26 L28.4 30.4Z" fill="#fff"/>
<path d="M26 23.6 Q32 23 36 20 Q40 23 46 23.6 Q46 36 36 42.8 Q26 36 26 23.6Z" fill="#f5c52c"/>
<path d="M26 23.6 Q32 23 36 20 V31.4 H27.2 Q26 28 26 23.6Z" fill="#2a86dc"/><path d="M36 31.4 H44.8 Q42.6 38.4 36 42.8Z" fill="#2a86dc"/>
</svg><svg style="left:14px;top:336px" width="13" height="13" viewBox="0 0 13 13"><rect x="0" y="0" width="13" height="13" rx="1" fill="#f6f8fa"/><path d="M3.2 9.8 L9.2 3.8 M4.8 3.4 H9.6 V8.2" stroke="#1f6fd0" stroke-width="1.7" fill="none"/></svg><span class="t sh" style="font-size:12px;color:#ffffff;left:2px;top:353.242px;">Atlas Toolbox</span><div class="win" id="snip" style="left:67px;top:128px;width:502px;height:233px;border:1px solid #3d5272;background:#272727;"><div class="a" style="left:0;top:0;width:500px;height:79px;background:#202020;"></div><div class="a" style="left:0;top:79px;width:500px;height:1px;background:#2e2e2e;"></div></div><svg style="left:83px;top:136px" width="18" height="17" viewBox="0 0 18 17">
<rect x="0.5" y="0.5" width="12" height="12" rx="1.5" fill="#f7efee"/>
<rect x="4.5" y="4.5" width="7" height="7" fill="#d9dde3"/><path d="M5 11 L11 5 V11Z" fill="#b9bec6"/>
<g fill="#b4381d"><rect x="1.6" y="1.6" width="2" height="2"/><rect x="4.7" y="1.6" width="2" height="2"/><rect x="7.8" y="1.6" width="2" height="2"/><rect x="1.6" y="4.7" width="2" height="2"/><rect x="1.6" y="7.8" width="2" height="2"/></g>
<circle cx="14.3" cy="8.2" r="1.9" fill="none" stroke="#2e9be0" stroke-width="1.3"/>
<circle cx="8.6" cy="13.8" r="1.9" fill="none" stroke="#2e9be0" stroke-width="1.3"/>
<path d="M9.5 9.5 L12.8 8.9 M9.5 9.5 L9 12.4" stroke="#9aa0a8" stroke-width="1.2" fill="none"/>
</svg><span class="t" style="font-size:12px;color:#ffffff;left:116.6px;top:138.842px;transform:scaleX(1.0180);">Ножницы</span><svg style="left:449px;top:137px" width="102" height="12" viewBox="0 0 102 12" fill="none" stroke="#8d8d8d" stroke-width="1">
<path d="M0 6.5 H10"/><rect x="45.5" y="1.5" width="9" height="9" rx="1"/><path d="M91 1.2 L100.5 10.8 M100.5 1.2 L91 10.8"/></svg><div class="a" style="left:84px;top:168px;width:99px;height:32px;border-radius:5px;background:#2d2d2d;box-shadow:inset 0 0 0 1px #333;"></div><svg style="left:97px;top:177px" width="13" height="13" viewBox="0 0 13 13" stroke="#d6cff5" stroke-width="1.1"><path d="M6.5 0 V13 M0 6.5 H13"/></svg><span class="t" style="font-size:14px;color:#ffffff;left:119.8px;top:176.549px;transform:scaleX(0.9433);">Создать</span><div class="a" style="left:199px;top:168px;width:75px;height:32px;border-radius:5px;background:#1c1c1c;box-shadow:inset 0 0 0 1px #2c2c2c;"></div><div class="a" style="left:199px;top:168px;width:38px;height:32px;border-radius:5px;background:#2d2d2d;box-shadow:inset 0 0 0 1px #3a3a3a;"></div><svg style="left:209.6px;top:175.4px" width="16.8" height="14" viewBox="0 0 18 15" fill="none" stroke="#fff" stroke-width="1.2">
<path d="M2.6 3.1 H5 L6.3 0.9 H11.2 L12.5 3.1 H14.9 Q16.9 3.1 16.9 5.1 V12 Q16.9 14 14.9 14 H2.6 Q0.6 14 0.6 12 V5.1 Q0.6 3.1 2.6 3.1Z"/><circle cx="8.75" cy="8.3" r="3.5"/></svg><div class="a" style="left:210px;top:196px;width:16px;height:3px;border-radius:2px;background:#b9b1ea;"></div><svg style="left:247px;top:177px" width="18" height="12" viewBox="0 0 18 12" fill="none" stroke="#fff" stroke-width="1.2">
<rect x="0.6" y="0.6" width="11.6" height="10.8" rx="2.4"/><path d="M12.2 4.4 L16.4 1.6 V10.4 L12.2 7.6"/></svg><svg style="left:299px;top:177px" width="18" height="15" viewBox="0 0 18 15" fill="none" stroke="#fff" stroke-width="1.2">
<path d="M9.5 12.2 H3 Q0.6 12.2 0.6 9.8 V3 Q0.6 0.6 3 0.6 H13 Q15.4 0.6 15.4 3 V8"/><path d="M13.8 10 V15 M11.3 12.5 H16.3" stroke-width="1.1"/></svg><svg style="left:321px;top:181px" width="9" height="6" viewBox="0 0 9 6" fill="none" stroke="#b5b5b5" stroke-width="1.1"><path d="M0.5 0.8 L4.5 4.8 L8.5 0.8"/></svg><svg style="left:354px;top:175px" width="17" height="17" viewBox="0 0 17 17" fill="none" stroke="#fff" stroke-width="1.2"><circle cx="8.5" cy="8.5" r="7.4"/><path d="M8.2 4.5 V9 H11.6"/></svg><svg style="left:377px;top:181px" width="9" height="6" viewBox="0 0 9 6" fill="none" stroke="#b5b5b5" stroke-width="1.1"><path d="M0.5 0.8 L4.5 4.8 L8.5 0.8"/></svg><svg style="left:534px;top:183px" width="17" height="4" viewBox="0 0 17 4" fill="#fff"><circle cx="2" cy="2" r="1.5"/><circle cx="8.5" cy="2" r="1.5"/><circle cx="15" cy="2" r="1.5"/></svg><span class="t" style="font-size:14px;color:#ffffff;left:111px;top:263.049px;transform:scaleX(0.9749);">Нажмите <b>клавишу Windows + Shift + S</b>, чтобы начать фрагмент</span><div class="win" id="rdp" style="left:131px;top:439px;width:407px;height:245px;border:1px solid #17243d;background:#f0f0f0;"><div class="a" style="left:0;top:0;width:405px;height:30px;background:#f3f3f3;"></div><div class="a" style="left:0;top:30px;width:405px;height:68px;background:linear-gradient(180deg,#d3e0f1 0%,#dde7f4 30%,#f1f5fa 62%,#fbfcfe 100%);"></div><div class="a" style="left:0;top:98px;width:405px;height:1px;background:#c9cdd3;"></div><div class="a" style="left:0;top:99px;width:405px;height:1px;background:#fdfdfd;"></div><div class="a" style="left:404px;top:0;width:1px;height:243px;background:#fcfcfc;"></div><div class="a" style="left:0;top:242px;width:405px;height:1px;background:#fcfcfc;"></div></div><svg style="left:140px;top:446px" width="16" height="16" viewBox="0 0 16 16">
<path d="M0.5 0.8 L11.5 0.2 L12 9 L1 9.8Z" fill="#dfe6f2" stroke="#a9b3c4" stroke-width=".6"/>
<path d="M1.6 1.8 L6.6 1.5 L7 8.4 L1.9 8.8Z" fill="#0a16c9"/><path d="M6.6 1.5 L10.6 1.2 L11 8 L7 8.4Z" fill="#9db6f2"/>
<path d="M3 11.6 H8 V10 H5.5 V11.6" fill="#c9ced6"/><rect x="2.5" y="11.4" width="6" height="1.2" fill="#d6dae0"/>
<circle cx="11" cy="11" r="4.3" fill="#fff" stroke="#7d858f" stroke-width=".9"/>
<path d="M8.8 10.2 L10.6 11.4 L8.8 12.6 M13.2 9.2 L11.4 10.4 L13.2 11.6" stroke="#1f8a1f" stroke-width="1.2" fill="none"/>
</svg><span class="t" style="font-size:12px;color:#8c8c8c;left:161px;top:449.442px;">Подключение к удаленному рабочему ст...</span><svg style="left:418px;top:448px" width="102" height="12" viewBox="0 0 102 12" fill="none" stroke-width="1">
<path d="M0 6.5 H10" stroke="#7a7a7a"/><rect x="45.5" y="1.5" width="9" height="9" rx="1" stroke="#d6d6d6"/><path d="M91.5 1.2 L101 10.8 M101 1.2 L91.5 10.8" stroke="#777"/></svg><svg style="left:149px;top:477px" width="48" height="49" viewBox="0 0 48 49">
<defs><linearGradient id="rm1" x1="0" y1="0" x2="1" y2="1"><stop offset="0" stop-color="#1c2fd8"/><stop offset=".55" stop-color="#0a1699"/><stop offset="1" stop-color="#2740c8"/></linearGradient>
<linearGradient id="rm2" x1="0" y1="0" x2="0" y2="1"><stop offset="0" stop-color="#f4f6fa"/><stop offset="1" stop-color="#b9c0cc"/></linearGradient></defs>
<ellipse cx="19" cy="42.5" rx="11" ry="4" fill="#cfd3d9"/><ellipse cx="19" cy="41.5" rx="10" ry="3.2" fill="#e6e8ec"/>
<path d="M14 33 L24 32 L25 41 L14.5 41.5Z" fill="#c4c9d1"/>
<path d="M4.5 1 L36 3.4 L34 35 L1 30.5Z" fill="url(#rm2)" stroke="#9aa3b2" stroke-width=".8"/>
<path d="M7 4 L33.5 6 L31.8 31.8 L4 28Z" fill="url(#rm1)"/>
<path d="M7 4 L18 4.8 L13 29.2 L4 28Z" fill="#4a63ea" opacity=".55"/>
<path d="M22 5.2 L33.5 6 L32.6 20 Z" fill="#b9c8f6" opacity=".75"/>
<circle cx="35" cy="36" r="10.3" fill="#f4f5f6" stroke="#8e959e" stroke-width="1.6"/>
<circle cx="35" cy="36" r="8.6" fill="#fafafa" stroke="#d8dbdf" stroke-width="1"/>
<path d="M29.6 33.6 L33.8 36.4 L29.6 39.4 M40.6 31.2 L36.2 34.2 L40.6 37.2" stroke="#2c9a27" stroke-width="2.3" fill="none"/>
</svg><span class="t" style="font-size:19px;color:#0a3593;left:209.6px;top:480.916px;transform:scaleX(1.0392);">Подключение к удаленному</span><span class="t" style="font-size:24px;color:#0a3593;font-weight:700;left:209.6px;top:505.484px;transform:scaleX(1.0359);">рабочему столу</span><span class="t" style="font-size:11px;color:#000;left:143.1px;top:554.988px;transform:scaleX(1.0083);">Компьютер:</span><div class="a" style="left:213px;top:548px;width:237px;height:22px;box-sizing:border-box;border:1px solid #8a8a8a;border-radius:3px;background:#fff;"></div><span class="t" style="font-size:11px;color:#5c5c5c;left:217.2px;top:554.988px;transform:scaleX(0.9692);">Например: computer.fabrikam.com</span><svg style="left:436px;top:557px" width="10" height="6" viewBox="0 0 10 6" fill="none" stroke="#444" stroke-width="1"><path d="M0.7 0.7 L5 5 L9.3 0.7"/></svg><span class="t" style="font-size:11px;color:#000;left:143.1px;top:583.988px;transform:scaleX(1.0208);">Пользователь:</span><span class="t" style="font-size:11px;color:#000;left:239.6px;top:583.988px;transform:scaleX(0.9695);">Не задано</span><span class="t" style="font-size:11px;color:#000;left:143.1px;top:609.688px;transform:scaleX(0.9950);">Поле имени компьютера не заполнено. Введите полное</span><span class="t" style="font-size:11px;color:#000;left:143.1px;top:623.088px;">имя удаленного компьютера.</span><svg style="left:144px;top:655px" width="18" height="18" viewBox="0 0 18 18">
<defs><linearGradient id="so1" x1="0" y1="0" x2="0" y2="1"><stop offset="0" stop-color="#ffffff"/><stop offset=".5" stop-color="#e3ebf7"/><stop offset="1" stop-color="#c5d5ee"/></linearGradient></defs>
<circle cx="9" cy="8.7" r="8" fill="url(#so1)" stroke="#a9b6cc" stroke-width="1"/><path d="M5.2 7.2 H12.8 L9 11.6Z" fill="#2d52a4"/></svg><span class="t" style="font-size:11px;color:#000;left:168.4px;top:658.588px;transform:scaleX(1.0139);"><span style="text-decoration:underline">П</span>оказать параметры</span><div class="a" style="left:373px;top:654px;width:72px;height:20px;box-sizing:border-box;border:1px solid #d0d0d0;border-bottom-color:#bdbdbd;border-radius:3px;background:#fdfdfd;"></div><span class="t" style="font-size:11px;color:#000;left:377.2px;top:658.588px;transform:scaleX(0.9804);">Подключить</span><div class="a" style="left:454px;top:654px;width:72px;height:20px;box-sizing:border-box;border:1px solid #d0d0d0;border-bottom-color:#bdbdbd;border-radius:3px;background:#fdfdfd;"></div><span class="t" style="font-size:11px;color:#000;left:467.2px;top:658.588px;">Справка</span><div class="win" id="calc" style="left:663px;top:168px;width:322px;height:534px;border:1px solid #3a4f70;background:#202020;"></div><svg style="left:684px;top:177px" width="12" height="15" viewBox="0 0 12 15">
<rect x="0" y="0" width="11.4" height="15" rx="1.2" fill="#7f8a96"/>
<rect x="1.3" y="1.3" width="8.8" height="3.4" rx=".5" fill="#53c6f4"/>
<g fill="#e9edf1"><rect x="1.3" y="6" width="2.4" height="2.2"/><rect x="4.5" y="6" width="2.4" height="2.2"/><rect x="7.7" y="6" width="2.4" height="2.2"/>
<rect x="1.3" y="9" width="2.4" height="2.2"/><rect x="4.5" y="9" width="2.4" height="2.2"/><rect x="1.3" y="12" width="2.4" height="2.2"/><rect x="4.5" y="12" width="2.4" height="2.2"/></g>
<rect x="7.7" y="9" width="2.4" height="5.2" fill="#1b4e8f"/></svg><span class="t" style="font-size:12px;color:#ffffff;left:712.5px;top:179.842px;transform:scaleX(0.9651);">Калькулятор</span><svg style="left:864px;top:179px" width="103" height="12" viewBox="0 0 103 12" fill="none" stroke="#8d8d8d" stroke-width="1">
<path d="M0 5.5 H10"/><rect x="46.5" y="1.5" width="9" height="9" rx="1"/><path d="M92.5 1.2 L102 10.8 M102 1.2 L92.5 10.8"/></svg><svg style="left:680px;top:220px" width="16" height="11" viewBox="0 0 16 11" stroke="#fff" stroke-width="1.1"><path d="M0 1 H16 M0 5.5 H16 M0 10 H16"/></svg><span class="t" style="font-size:20px;color:#ffffff;left:711.7px;top:214.47px;transform:scaleX(1.0384);-webkit-text-stroke:.55px #fff;">Обычный</span><svg style="left:824px;top:218px" width="14" height="14" viewBox="0 0 14 14" fill="none" stroke="#fff" stroke-width="1.15">
<path d="M0.6 6.4 V2 Q0.6 0.6 2 0.6 H12 Q13.4 0.6 13.4 2 V12 Q13.4 13.4 12 13.4 H8"/><path d="M7.5 0.6 V6.5 H13.4"/><path d="M0.7 13.3 L5.4 8.6 M0.6 8.5 H5.5 V13.4"/></svg><svg style="left:951px;top:216px" width="18" height="18" viewBox="0 0 18 18" fill="none" stroke="#fff" stroke-width="1.2">
<path d="M3.63 3.53 A7.6 7.6 0 1 1 1.47 9.96"/><path d="M2.2 0.8 V5.4 H6.8"/><path d="M8.6 4.2 V9.4 H12.2"/></svg><span class="t" style="font-size:46px;color:#ffffff;right:706.6px;top:283.261px;transform-origin:100% 50%;transform:scaleX(1.1565);-webkit-text-stroke:.7px #fff;">0</span><span class="t" style="font-size:12px;color:#6a6a6a;left:683.15px;top:357.242px;transform:scaleX(1.0229);">MC</span><span class="t" style="font-size:12px;color:#6a6a6a;left:735.7px;top:357.242px;transform:scaleX(0.9640);">MR</span><span class="t" style="font-size:12px;color:#fff;left:787.25px;top:357.242px;transform:scaleX(1.0990);">M+</span><span class="t" style="font-size:12px;color:#fff;left:839.35px;top:357.242px;transform:scaleX(1.0872);">M−</span><span class="t" style="font-size:12px;color:#fff;left:892.2px;top:357.242px;transform:scaleX(0.9889);">MS</span><span class="t" style="font-size:12px;color:#6a6a6a;left:945.3px;top:357.242px;transform:scaleX(1.0500);">M</span><svg style="left:957px;top:362px" width="8" height="5" viewBox="0 0 8 5" fill="none" stroke="#6a6a6a" stroke-width="1"><path d="M0.5 0.7 L4 4.2 L7.5 0.7"/></svg><div class="cb f" style="left:668px;top:381px;width:77px;height:51px;"></div><span class="t" style="font-size:15px;color:#fff;left:700.1px;top:399.202px;transform:scaleX(0.9593);">%</span><div class="cb f" style="left:747px;top:381px;width:76px;height:51px;"></div><span class="t" style="font-size:14px;color:#fff;left:776.8px;top:399.649px;transform:scaleX(0.8431);">CE</span><div class="cb f" style="left:825px;top:381px;width:77px;height:51px;"></div><span class="t" style="font-size:14px;color:#fff;left:859.3px;top:399.649px;transform:scaleX(0.8296);">C</span><div class="cb f" style="left:904px;top:381px;width:76px;height:51px;"></div><svg style="left:934px;top:401px" width="16" height="11" viewBox="0 0 16 11" fill="none" stroke="#fff" stroke-width="1.1"><path d="M5.2 0.6 H14 Q15.4 0.6 15.4 2 V9 Q15.4 10.4 14 10.4 H5.2 L0.7 5.5Z"/><path d="M7.6 3.2 L12.2 7.8 M12.2 3.2 L7.6 7.8"/></svg><div class="cb f" style="left:668px;top:434px;width:77px;height:51px;"></div><span class="t" style="font-size:15px;color:#fff;left:698.5px;top:451.303px;"><span style="font-family:'Liberation Sans','DejaVu Sans',sans-serif;font-size:10px;position:relative;top:-4px">1</span>/<i style="font-family:'Liberation Serif','DejaVu Serif',serif">x</i></span><div class="cb f" style="left:747px;top:434px;width:76px;height:51px;"></div><span class="t" style="font-size:17px;color:#fff;font-family:'Liberation Serif','DejaVu Serif',serif;left:778px;top:449.762px;"><i>x</i><span style="font-family:'Liberation Sans','DejaVu Sans',sans-serif;font-size:9px;position:relative;top:-7px;left:1px">2</span></span><div class="cb f" style="left:825px;top:434px;width:77px;height:51px;"></div><svg style="left:854.5px;top:452.5px" width="18" height="14" viewBox="0 0 18 14" fill="none" stroke="#fff" stroke-width="1"><path d="M3.2 8.2 L4.8 7.4 L7 12.6 L9.6 1.2 H17.2"/></svg><span class="t" style="font-size:8px;color:#fff;left:854.9px;top:451.728px;">2</span><span class="t" style="font-size:15px;color:#fff;font-family:'Liberation Serif','DejaVu Serif',serif;left:864.7px;top:452.137px;"><i>x</i></span><div class="cb f" style="left:904px;top:434px;width:76px;height:51px;"></div><svg style="left:935px;top:452.5px" width="14" height="14" viewBox="0 0 14 14" fill="#fff" stroke="#fff" stroke-width="1"><path d="M0.5 7 H13.5"/><circle cx="7" cy="2.6" r=".9" stroke="none"/><circle cx="7" cy="11.4" r=".9" stroke="none"/></svg><div class="cb" style="left:668px;top:487px;width:77px;height:51px;"></div><span class="t" style="font-size:18px;color:#fff;left:701.5px;top:503.863px;width:10px;text-align:center;">7</span><div class="cb" style="left:747px;top:487px;width:76px;height:51px;"></div><span class="t" style="font-size:18px;color:#fff;left:780px;top:503.863px;width:10px;text-align:center;">8</span><div class="cb" style="left:825px;top:487px;width:77px;height:51px;"></div><span class="t" style="font-size:18px;color:#fff;left:858.5px;top:503.863px;width:10px;text-align:center;">9</span><div class="cb f" style="left:904px;top:487px;width:76px;height:51px;"></div><svg style="left:936px;top:506.5px" width="12" height="12" viewBox="0 0 12 12" fill="none" stroke="#fff" stroke-width="1"><path d="M0.8 0.8 L11.2 11.2 M11.2 0.8 L0.8 11.2"/></svg><div class="cb" style="left:668px;top:540px;width:77px;height:51px;"></div><span class="t" style="font-size:18px;color:#fff;left:701.5px;top:556.863px;width:10px;text-align:center;">4</span><div class="cb" style="left:747px;top:540px;width:76px;height:51px;"></div><span class="t" style="font-size:18px;color:#fff;left:780px;top:556.863px;width:10px;text-align:center;">5</span><div class="cb" style="left:825px;top:540px;width:77px;height:51px;"></div><span class="t" style="font-size:18px;color:#fff;left:858.5px;top:556.863px;width:10px;text-align:center;">6</span><div class="cb f" style="left:904px;top:540px;width:76px;height:51px;"></div><svg style="left:936px;top:564.5px" width="12" height="2" viewBox="0 0 12 2" fill="none" stroke="#fff" stroke-width="1"><path d="M0 1 H12"/></svg><div class="cb" style="left:668px;top:593px;width:77px;height:51px;"></div><span class="t" style="font-size:18px;color:#fff;left:701.5px;top:609.863px;width:10px;text-align:center;">1</span><div class="cb" style="left:747px;top:593px;width:76px;height:51px;"></div><span class="t" style="font-size:18px;color:#fff;left:780px;top:609.863px;width:10px;text-align:center;">2</span><div class="cb" style="left:825px;top:593px;width:77px;height:51px;"></div><span class="t" style="font-size:18px;color:#fff;left:858.5px;top:609.863px;width:10px;text-align:center;">3</span><div class="cb f" style="left:904px;top:593px;width:76px;height:51px;"></div><svg style="left:936px;top:612.5px" width="12" height="12" viewBox="0 0 12 12" fill="none" stroke="#fff" stroke-width="1"><path d="M0 6 H12 M6 0 V12"/></svg><div class="cb" style="left:668px;top:646px;width:77px;height:51px;"></div><svg style="left:698.5px;top:665px" width="16" height="13" viewBox="0 0 16 13" fill="none" stroke="#fff" stroke-width="1.1"><path d="M0.5 3.5 H6.5 M3.5 0.5 V6.5 M11 0.8 L5.6 12.2 M9.8 9.8 H15.4"/></svg><div class="cb" style="left:747px;top:646px;width:76px;height:51px;"></div><span class="t" style="font-size:18px;color:#fff;left:780px;top:662.863px;width:10px;text-align:center;">0</span><div class="cb" style="left:825px;top:646px;width:77px;height:51px;"></div><span class="t" style="font-size:18px;color:#fff;font-family:'Liberation Serif','DejaVu Serif',serif;font-style:italic;left:860.5px;top:660.925px;">,</span><div class="cb" style="left:904px;top:646px;width:76px;height:51px;background:#bdb8e8;"></div><svg style="left:935px;top:668px" width="14" height="7" viewBox="0 0 14 7" fill="none" stroke="#1a1636" stroke-width="1.3"><path d="M0 1 H14 M0 6 H14"/></svg><div class="win" id="expl" style="left:1067px;top:22px;width:531px;height:831px;border:1px solid #2b3650;border-top-color:#3a5680;border-left-color:#2f4a72;background:#fff;"><div class="a" style="left:0;top:0;width:529px;height:30px;background:#202020;"></div><div class="a" style="left:0;top:30px;width:529px;height:55px;background:#191919;"></div><div class="a" style="left:0;top:85px;width:529px;height:31px;background:#f5f6f7;"></div><div class="a" style="left:0;top:115px;width:529px;height:1px;background:#e4e5e6;"></div><div class="a" style="left:2px;top:116px;width:154px;height:689px;background:#191919;"></div><div class="a" style="left:2px;top:120px;width:154px;height:24px;background:#333333;"></div><div class="a" style="left:10px;top:156px;width:138px;height:1px;background:#3e3e3e;"></div><div class="a" style="left:10px;top:324px;width:138px;height:1px;background:#3e3e3e;"></div><div class="a" style="left:0;top:805px;width:529px;height:24px;background:#1c1c1c;"></div><div class="a" style="left:137px;top:40px;width:228px;height:34px;box-sizing:border-box;border:1px solid #5b5b5b;"></div><div class="a" style="left:377px;top:40px;width:170px;height:34px;box-sizing:border-box;border:1px solid #5b5b5b;"></div></div><svg style="left:1077px;top:29px" width="16" height="16" viewBox="0 0 16 16">
<path d="M6 0.3 L7.6 0.3 L8 1.7 L9.2 2.2 L10.5 1.4 L11.7 2.6 L10.9 3.9 L11.4 5.1 L12.8 5.5 V7.1 L11.4 7.5 L10.9 8.7 L11.7 10 L10.5 11.2 L9.2 10.4 L8 10.9 L7.6 12.3 H6 L5.6 10.9 L4.4 10.4 L3.1 11.2 L1.9 10 L2.7 8.7 L2.2 7.5 L0.8 7.1 V5.5 L2.2 5.1 L2.7 3.9 L1.9 2.6 L3.1 1.4 L4.4 2.2 L5.6 1.7Z" fill="#c3cad6"/>
<rect x="5.3" y="6.2" width="10" height="8.8" fill="#f4f4f4" stroke="#b59a78" stroke-width=".8"/><rect x="5.3" y="6.2" width="10" height="1.8" fill="#8a8f98"/>
<path d="M7.6 11 L9.4 12.8 L13 9.2" stroke="#1c7fd6" stroke-width="1.6" fill="none"/></svg><span class="t" style="font-size:12px;color:#8e8e8e;left:1097.3px;top:31.542px;transform:scaleX(0.9933);">Инструменты Windows</span><svg style="left:1477px;top:32px" width="103" height="11" viewBox="0 0 103 11" fill="none" stroke="#8d8d8d" stroke-width="1">
<path d="M0.5 5.5 H10.5"/><rect x="46.5" y="0.5" width="9" height="9" rx="1"/><path d="M92 0.4 L101.6 10 M101.6 0.4 L92 10"/></svg><svg style="left:1082px;top:73px" width="110" height="14" viewBox="0 0 110 14" fill="none" stroke-width="1.3" stroke-linecap="round" stroke-linejoin="round">
<path d="M13 7 H1.2 M6.2 1.8 L1 7 L6.2 12.2" stroke="#9b9b9b"/>
<path d="M36 7 H47.8 M42.8 1.8 L48 7 L42.8 12.2" stroke="#9b9b9b"/>
<path d="M68.5 5 L72.5 9 L76.5 5" stroke="#9b9b9b"/>
<path d="M101.5 13 V1.4 M96.3 6.4 L101.5 1.2 L106.7 6.4" stroke="#ffffff"/></svg><svg style="left:1215px;top:71px" width="16" height="16" viewBox="0 0 16 16">
<path d="M6 0.3 L7.6 0.3 L8 1.7 L9.2 2.2 L10.5 1.4 L11.7 2.6 L10.9 3.9 L11.4 5.1 L12.8 5.5 V7.1 L11.4 7.5 L10.9 8.7 L11.7 10 L10.5 11.2 L9.2 10.4 L8 10.9 L7.6 12.3 H6 L5.6 10.9 L4.4 10.4 L3.1 11.2 L1.9 10 L2.7 8.7 L2.2 7.5 L0.8 7.1 V5.5 L2.2 5.1 L2.7 3.9 L1.9 2.6 L3.1 1.4 L4.4 2.2 L5.6 1.7Z" fill="#c3cad6"/>
<rect x="5.3" y="6.2" width="10" height="8.8" fill="#f4f4f4" stroke="#b59a78" stroke-width=".8"/><rect x="5.3" y="6.2" width="10" height="1.8" fill="#8a8f98"/>
<path d="M7.6 11 L9.4 12.8 L13 9.2" stroke="#1c7fd6" stroke-width="1.6" fill="none"/></svg><span class="t" style="font-size:11px;color:#8a8a8a;left:1234.5px;top:71.1885px;transform:scaleX(1.3061);">«</span><span class="t" style="font-size:12px;color:#ffffff;left:1249px;top:73.842px;transform:scaleX(0.9161);">Вс...</span><svg style="left:1278px;top:77px" width="5" height="8" viewBox="0 0 5 8" fill="none" stroke="#fff" stroke-width="1.5"><path d="M0.8 0.8 L4 4 L0.8 7.2"/></svg><span class="t" style="font-size:12px;color:#ffffff;left:1290px;top:73.842px;transform:scaleX(1.0050);">Инст...</span><svg style="left:1377px;top:77px" width="9" height="6" viewBox="0 0 9 6" fill="none" stroke="#e0e0e0" stroke-width="1.2"><path d="M0.6 0.7 L4.5 4.7 L8.4 0.7"/></svg><svg style="left:1408px;top:73px" width="14" height="14" viewBox="0 0 14 14" fill="none" stroke="#fff" stroke-width="1.2"><path d="M11.9 4.6 A5.6 5.6 0 1 0 12.6 7.6"/><path d="M8.6 4.3 H12.4 V0.6"/></svg><div class="a" style="left:1446px;top:64px;width:150px;height:32px;overflow:hidden;"><span class="t" style="font-size:12px;color:#727272;left:8.1px;top:10.142px;">Поиск в: Инструменты Wi</span></div><span class="t" style="font-size:12px;color:#1e3a5f;left:1086px;top:117.042px;transform:scaleX(1.0081);">Упорядочить</span><svg style="left:1164px;top:121px" width="8" height="5" viewBox="0 0 8 5" fill="#1e3a5f"><path d="M0 0 H8 L4 4.6Z"/></svg><svg style="left:1477px;top:118px" width="13" height="10" viewBox="0 0 13 10" stroke="#111" stroke-width="1.3"><path d="M0 0.8 H5.2 M7.4 0.8 H12.6 M0 3.6 H5.2 M7.4 3.6 H12.6 M0 6.4 H5.2 M7.4 6.4 H12.6 M0 9.2 H5.2 M7.4 9.2 H12.6"/></svg><svg style="left:1500px;top:121px" width="8" height="5" viewBox="0 0 8 5" fill="#1e2a4a"><path d="M0 0 H8 L4 4.6Z"/></svg><svg style="left:1531px;top:117px" width="14" height="12" viewBox="0 0 14 12"><rect x="0.7" y="0.7" width="12.6" height="10.6" fill="#fff" stroke="#111" stroke-width="1.4"/><rect x="7.8" y="1.6" width="4.8" height="8.8" fill="#2f8fe0"/></svg><svg style="left:1566px;top:115px" width="16" height="16" viewBox="0 0 16 16"><circle cx="8" cy="8" r="8" fill="#1a82d2"/></svg><span class="t" style="font-size:12px;color:#ffffff;font-weight:700;left:1570.6px;top:117.442px;transform:scaleX(0.8987);">?</span><span class="t" style="font-size:12px;color:#e6e6e6;left:1082.5px;top:833.342px;transform:scaleX(0.9342);">Элементов: 31</span><div class="a" style="left:1170px;top:833px;width:1px;height:13px;background:#cfcfcf;"></div><svg style="left:1549px;top:832px" width="16" height="16" viewBox="0 0 16 16"><rect x="0.6" y="0.6" width="14.8" height="14.8" rx="2" fill="#c9c9c9" stroke="#d8d8d8" stroke-width="1"/><path d="M2.5 3.8 H13.5 M2.5 6.6 H13.5 M2.5 9.4 H13.5 M2.5 12.2 H13.5" stroke="#111" stroke-width="1.2"/></svg><svg style="left:1573px;top:832px" width="16" height="16" viewBox="0 0 16 16"><rect x="0.6" y="0.6" width="14.8" height="14.8" rx="2" fill="#c9c9c9" stroke="#d8d8d8" stroke-width="1"/><rect x="2.8" y="2.8" width="10.4" height="8" fill="#fff" stroke="#111" stroke-width="1.3"/><path d="M2.5 13 H13.5" stroke="#111" stroke-width="1"/></svg><svg style="left:1094px;top:147px" width="16" height="16" viewBox="0 0 16 16"><path d="M8 0.8 L15.6 8 L14 8 V15 H10 V10 H6 V15 H2 V8 L0.4 8Z" fill="#d9dbde"/><path d="M8 0.3 L16 7.8 L14.6 9 L8 2.8 L1.4 9 L0 7.8Z" fill="#f08a2e"/><path d="M2 8.6 L8 3 L14 8.6 V15 H10 V10 H6 V15 H2Z" fill="#e3e4e6"/></svg><span class="t" style="font-size:12px;color:#ffffff;left:1115.4px;top:148.642px;transform:scaleX(0.9456);">Главная</span><svg style="left:1094px;top:195px" width="16" height="16" viewBox="0 0 16 16"><defs><linearGradient id="nd1" x1="0" y1="0" x2="1" y2="1"><stop offset="0" stop-color="#5fd0f5"/><stop offset="1" stop-color="#1883d0"/></linearGradient></defs><rect x="0" y="2" width="16" height="11" rx="1.6" fill="url(#nd1)"/><rect x="1.8" y="4" width="2" height="1.6" fill="#fff"/><rect x="1.8" y="6.6" width="2" height="1.6" fill="#fff"/><rect x="10.6" y="12.6" width="1.4" height="1.2" fill="#bfe6fa"/><rect x="12.8" y="12.6" width="1.4" height="1.2" fill="#bfe6fa"/></svg><span class="t" style="font-size:12px;color:#ffffff;left:1115.4px;top:196.642px;">Рабочий стол</span><svg style="left:1210px;top:197px" width="11" height="11" viewBox="0 0 11 11"><path d="M6.2 0.4 L10.6 4.8 L9.4 5.3 L7.6 5 L5.6 7.8 L5.9 9.6 L5 10.2 L0.8 6 L1.4 5.1 L3.2 5.4 L6 3.4 L5.7 1.6Z" fill="#9a9a9a"/><path d="M3.4 7.6 L0.5 10.5" stroke="#9a9a9a" stroke-width="1.1"/></svg><svg style="left:1094px;top:219px" width="16" height="16" viewBox="0 0 16 16"><path d="M8 0.5 V11 M3.4 6.8 L8 11.4 L12.6 6.8" stroke="#2fbf8a" stroke-width="1.6" fill="none"/><path d="M2 14.6 H14" stroke="#2fbf8a" stroke-width="1.7"/></svg><span class="t" style="font-size:12px;color:#ffffff;left:1115.4px;top:220.642px;transform:scaleX(1.0042);">Загрузки</span><svg style="left:1210px;top:221px" width="11" height="11" viewBox="0 0 11 11"><path d="M6.2 0.4 L10.6 4.8 L9.4 5.3 L7.6 5 L5.6 7.8 L5.9 9.6 L5 10.2 L0.8 6 L1.4 5.1 L3.2 5.4 L6 3.4 L5.7 1.6Z" fill="#9a9a9a"/><path d="M3.4 7.6 L0.5 10.5" stroke="#9a9a9a" stroke-width="1.1"/></svg><svg style="left:1094px;top:243px" width="16" height="16" viewBox="0 0 16 16"><defs><linearGradient id="ndc" x1="0" y1="0" x2="1" y2="1"><stop offset="0" stop-color="#c6d6ea"/><stop offset="1" stop-color="#7f9fca"/></linearGradient></defs><rect x="2" y="0.3" width="12" height="15.4" rx="1.4" fill="url(#ndc)"/><path d="M4.4 4.4 H8.2 M4.4 6.8 H11.6 M4.4 9.2 H11.6 M4.4 11.6 H11.6" stroke="#fff" stroke-width="1.2"/><rect x="9.2" y="3.4" width="2.6" height="2.2" fill="#fff"/></svg><span class="t" style="font-size:12px;color:#ffffff;left:1115.4px;top:244.642px;transform:scaleX(1.0120);">Документы</span><svg style="left:1210px;top:245px" width="11" height="11" viewBox="0 0 11 11"><path d="M6.2 0.4 L10.6 4.8 L9.4 5.3 L7.6 5 L5.6 7.8 L5.9 9.6 L5 10.2 L0.8 6 L1.4 5.1 L3.2 5.4 L6 3.4 L5.7 1.6Z" fill="#9a9a9a"/><path d="M3.4 7.6 L0.5 10.5" stroke="#9a9a9a" stroke-width="1.1"/></svg><svg style="left:1094px;top:267px" width="16" height="16" viewBox="0 0 16 16"><defs><linearGradient id="npc" x1="0" y1="0" x2="1" y2="1"><stop offset="0" stop-color="#3fb2f0"/><stop offset="1" stop-color="#1477d0"/></linearGradient></defs><rect x="1.2" y="1.2" width="13.6" height="13.6" rx="1.6" fill="url(#npc)"/><path d="M2 13.8 L7.6 7.6 L13.8 13.8Z" fill="#fff"/><circle cx="11.4" cy="4.6" r="1.2" fill="#fff"/></svg><span class="t" style="font-size:12px;color:#ffffff;left:1115.4px;top:268.642px;">Изображения</span><svg style="left:1210px;top:269px" width="11" height="11" viewBox="0 0 11 11"><path d="M6.2 0.4 L10.6 4.8 L9.4 5.3 L7.6 5 L5.6 7.8 L5.9 9.6 L5 10.2 L0.8 6 L1.4 5.1 L3.2 5.4 L6 3.4 L5.7 1.6Z" fill="#9a9a9a"/><path d="M3.4 7.6 L0.5 10.5" stroke="#9a9a9a" stroke-width="1.1"/></svg><svg style="left:1094px;top:291px" width="16" height="16" viewBox="0 0 16 16"><defs><linearGradient id="nmu" x1="0" y1="0" x2="1" y2="1"><stop offset="0" stop-color="#f08d5a"/><stop offset="1" stop-color="#c76aa0"/></linearGradient></defs><circle cx="8" cy="8" r="8" fill="url(#nmu)"/><path d="M8.6 3.2 V10.6" stroke="#fff" stroke-width="1.3"/><path d="M8.6 3.2 L11.4 4.4 V6 L8.6 5Z" fill="#fff"/><ellipse cx="7.2" cy="10.8" rx="1.9" ry="1.5" fill="#fff"/></svg><span class="t" style="font-size:12px;color:#ffffff;left:1115.4px;top:292.642px;">Музыка</span><svg style="left:1210px;top:293px" width="11" height="11" viewBox="0 0 11 11"><path d="M6.2 0.4 L10.6 4.8 L9.4 5.3 L7.6 5 L5.6 7.8 L5.9 9.6 L5 10.2 L0.8 6 L1.4 5.1 L3.2 5.4 L6 3.4 L5.7 1.6Z" fill="#9a9a9a"/><path d="M3.4 7.6 L0.5 10.5" stroke="#9a9a9a" stroke-width="1.1"/></svg><svg style="left:1094px;top:315px" width="16" height="16" viewBox="0 0 16 16"><defs><linearGradient id="nvd" x1="0" y1="0" x2="1" y2="1"><stop offset="0" stop-color="#b06be8"/><stop offset="1" stop-color="#7b3fd0"/></linearGradient></defs><rect x="1.2" y="0.8" width="13.6" height="14.4" rx="1.6" fill="url(#nvd)"/><path d="M6 4.8 L11.2 8 L6 11.2Z" fill="#fff"/><g fill="#4a2490"><rect x="2.2" y="2.4" width="1.6" height="1.6"/><rect x="2.2" y="7.2" width="1.6" height="1.6"/><rect x="2.2" y="12" width="1.6" height="1.6"/><rect x="12.2" y="2.4" width="1.6" height="1.6"/><rect x="12.2" y="7.2" width="1.6" height="1.6"/><rect x="12.2" y="12" width="1.6" height="1.6"/></g></svg><span class="t" style="font-size:12px;color:#ffffff;left:1115.4px;top:316.642px;transform:scaleX(0.9298);">Видео</span><svg style="left:1210px;top:317px" width="11" height="11" viewBox="0 0 11 11"><path d="M6.2 0.4 L10.6 4.8 L9.4 5.3 L7.6 5 L5.6 7.8 L5.9 9.6 L5 10.2 L0.8 6 L1.4 5.1 L3.2 5.4 L6 3.4 L5.7 1.6Z" fill="#9a9a9a"/><path d="M3.4 7.6 L0.5 10.5" stroke="#9a9a9a" stroke-width="1.1"/></svg><svg style="left:1094px;top:363px" width="16" height="16" viewBox="0 0 16 16"><defs><linearGradient id="npp" x1="0" y1="0" x2="1" y2="1"><stop offset="0" stop-color="#38c8e8"/><stop offset="1" stop-color="#1585d2"/></linearGradient></defs><rect x="0" y="1" width="16" height="11" rx="1" fill="url(#npp)"/><rect x="7.2" y="12" width="1.6" height="2.2" fill="#9aa6b2"/><rect x="4" y="14" width="8" height="1.2" fill="#b4bec8"/></svg><span class="t" style="font-size:12px;color:#ffffff;left:1115.4px;top:364.642px;transform:scaleX(0.9952);">Этот компьютер</span><div class="a" style="left:1224px;top:139px;width:373px;height:689px;overflow:hidden;"><svg style="left:50px;top:8px" width="16" height="16" viewBox="0 0 16 16"><rect x="0.5" y="0.5" width="15" height="15" rx="1" fill="#cfe2f6" stroke="#6ea6dc" stroke-width="1"/><circle cx="8" cy="8" r="6" fill="#f28a18"/><path d="M6 4.6 L11.2 8 L6 11.4Z" fill="#fff"/></svg><span class="t" style="font-size:12px;color:#000;left:68.4px;top:9.842px;transform:scaleX(0.9727);">Windows Media Player Legacy</span><svg style="left:50px;top:29px" width="16" height="16" viewBox="0 0 16 16"><path d="M3.2 2.2 H16 L12.8 13.4 H0Z" fill="#3f6fd6"/><path d="M3.2 2.2 H16 L15 5.8 H2.2Z" fill="#5886e6" opacity=".6"/><path d="M4.6 4.6 L8.6 7.8 L3.8 11" stroke="#fff" stroke-width="1.5" fill="none"/><path d="M8.4 11 H12" stroke="#fff" stroke-width="1.4"/></svg><span class="t" style="font-size:12px;color:#000;left:68.4px;top:30.842px;transform:scaleX(0.9723);">Windows PowerShell</span><svg style="left:50px;top:50px" width="16" height="16" viewBox="0 0 16 16"><path d="M3.2 2.2 H16 L12.8 13.4 H0Z" fill="#3f6fd6"/><path d="M3.2 2.2 H16 L15 5.8 H2.2Z" fill="#5886e6" opacity=".6"/><path d="M4.6 4.6 L8.6 7.8 L3.8 11" stroke="#fff" stroke-width="1.5" fill="none"/><path d="M8.4 11 H12" stroke="#fff" stroke-width="1.4"/></svg><span class="t" style="font-size:12px;color:#000;left:68.4px;top:51.842px;transform:scaleX(0.9568);">Windows PowerShell (x86)</span><svg style="left:50px;top:71px" width="16" height="16" viewBox="0 0 16 16"><path d="M3 0.6 H16 L13.4 10.6 H0.6Z" fill="#1ea5c6"/><path d="M5 2.6 L8.4 5.2 L4.4 7.8" stroke="#fff" stroke-width="1.4" fill="none"/><path d="M8.4 8 H11.6" stroke="#fff" stroke-width="1.3"/><path d="M0.6 10.6 H13.4 L12.6 15 H0Z" fill="#7d8a8c"/><path d="M2 12.8 H6 M7.6 12.8 H10.8" stroke="#d7dede" stroke-width="1.2"/></svg><span class="t" style="font-size:12px;color:#000;left:68.4px;top:72.842px;transform:scaleX(0.9395);">Windows PowerShell ISE</span><svg style="left:50px;top:92px" width="16" height="16" viewBox="0 0 16 16"><path d="M3 0.6 H16 L13.4 10.6 H0.6Z" fill="#1ea5c6"/><path d="M5 2.6 L8.4 5.2 L4.4 7.8" stroke="#fff" stroke-width="1.4" fill="none"/><path d="M8.4 8 H11.6" stroke="#fff" stroke-width="1.3"/><path d="M0.6 10.6 H13.4 L12.6 15 H0Z" fill="#7d8a8c"/><path d="M2 12.8 H6 M7.6 12.8 H10.8" stroke="#d7dede" stroke-width="1.2"/></svg><span class="t" style="font-size:12px;color:#000;left:68.4px;top:93.842px;transform:scaleX(0.9346);">Windows PowerShell ISE (x86)</span><svg style="left:50px;top:113px" width="16" height="16" viewBox="0 0 16 16"><path d="M3 3.2 H15.4 L13.4 12.6 H0.8Z" fill="#f4fbff" stroke="#49b1ea" stroke-width="1.2"/><rect x="4.4" y="6.2" width="7.2" height="3.2" fill="#dff1fc" stroke="#1e8ad6" stroke-width="1"/><path d="M0 6 H1.6 M0 8 H1.2" stroke="#9ad4f4" stroke-width=".8"/></svg><span class="t" style="font-size:12px;color:#000;left:68.4px;top:114.842px;">Выполнить</span><svg style="left:50px;top:134px" width="16" height="16" viewBox="0 0 16 16"><path d="M1 8.6 Q1 6.4 3.4 6 L10.6 5 Q13 5 13.4 7 V11.6 Q13.4 13.2 11.4 13.2 H3 Q1 13.2 1 11.6Z" fill="#dfe2e5" stroke="#858b92" stroke-width=".9"/><path d="M1.4 10 H13 V11.8 Q13 12.8 11.4 12.8 H3 Q1.4 12.8 1.4 11.8Z" fill="#9aa0a7"/><g transform="translate(8.2,6.2) scale(0.95)"><path d="M0 0.6 Q3.6 0.4 4 -0.6 Q4.4 0.4 8 0.6 Q8 6 4 8.4 Q0 6 0 0.6Z" fill="#f3c928"/><path d="M0 0.6 Q3.6 0.4 4 -0.6 V3.8 H0.2Z" fill="#2e7fd8"/><path d="M4 3.8 H7.8 Q7.2 6.4 4 8.4Z" fill="#2e7fd8"/></g></svg><span class="t" style="font-size:12px;color:#000;left:68.4px;top:135.842px;transform:scaleX(0.9909);">Диск восстановления</span><svg style="left:50px;top:155px" width="16" height="16" viewBox="0 0 16 16"><rect x="0" y="2" width="16" height="12" fill="#1f7fd6"/><path d="M0 9 L2.2 6.4 L3.8 8 L5.6 4.6 L7.4 9.4 L9.2 7 L10.8 8.6 L12.6 4.8 L14.4 8.2 L16 6.6 V14 H0Z" fill="#a4d8f6"/><path d="M0 11 H16 V14 H0Z" fill="#bfe4fa"/></svg><span class="t" style="font-size:12px;color:#000;left:68.4px;top:156.842px;transform:scaleX(0.9715);">Диспетчер задач</span><svg style="left:50px;top:176px" width="16" height="16" viewBox="0 0 16 16"><circle cx="7" cy="7" r="6.6" fill="#2b76d2"/><path d="M3 3.4 Q5.4 1 8 2 Q9 4 7 5.2 Q5 5.6 4.6 7.8 Q3 7.4 2.2 5.6Z" fill="#45b649"/><path d="M8.4 7.4 Q11 6.8 12.6 8.6 Q12 11.6 9.6 12.8 Q8.6 10.6 8.4 7.4Z" fill="#45b649"/><circle cx="5" cy="4.4" r="2.6" fill="#9fd4ff" opacity=".45"/><g transform="translate(8.2,7.6) scale(0.95)"><path d="M0 0.6 Q3.6 0.4 4 -0.6 Q4.4 0.4 8 0.6 Q8 6 4 8.4 Q0 6 0 0.6Z" fill="#f3c928"/><path d="M0 0.6 Q3.6 0.4 4 -0.6 V3.8 H0.2Z" fill="#2e7fd8"/><path d="M4 3.8 H7.8 Q7.2 6.4 4 8.4Z" fill="#2e7fd8"/></g></svg><span class="t" style="font-size:12px;color:#000;left:68.4px;top:177.842px;transform:scaleX(0.9528);">Инициатор iSCSI</span><svg style="left:50px;top:197px" width="16" height="16" viewBox="0 0 16 16"><rect x="0.4" y="0.6" width="15" height="14.6" fill="#e9ecef" stroke="#7b8694" stroke-width=".8"/><rect x="0.4" y="0.6" width="15" height="3" fill="#3f66b8"/><path d="M2.4 6 H12 M2.4 8.2 H10" stroke="#59616c" stroke-width="1.3"/><rect x="1.2" y="10" width="8" height="4.2" fill="#6d7783"/><path d="M2.4 12.2 H4" stroke="#8fe06c" stroke-width="1.1"/><g transform="translate(8.2,7.4) scale(0.95)"><path d="M0 0.6 Q3.6 0.4 4 -0.6 Q4.4 0.4 8 0.6 Q8 6 4 8.4 Q0 6 0 0.6Z" fill="#f3c928"/><path d="M0 0.6 Q3.6 0.4 4 -0.6 V3.8 H0.2Z" fill="#2e7fd8"/><path d="M4 3.8 H7.8 Q7.2 6.4 4 8.4Z" fill="#2e7fd8"/></g></svg><span class="t" style="font-size:12px;color:#000;left:68.4px;top:198.842px;transform:scaleX(0.9742);">Источники данных ODBC (32-разрядная версия)</span><svg style="left:50px;top:218px" width="16" height="16" viewBox="0 0 16 16"><rect x="0.4" y="0.6" width="15" height="14.6" fill="#e9ecef" stroke="#7b8694" stroke-width=".8"/><rect x="0.4" y="0.6" width="15" height="3" fill="#3f66b8"/><path d="M2.4 6 H12 M2.4 8.2 H10" stroke="#59616c" stroke-width="1.3"/><rect x="1.2" y="10" width="8" height="4.2" fill="#6d7783"/><path d="M2.4 12.2 H4" stroke="#8fe06c" stroke-width="1.1"/><g transform="translate(8.2,7.4) scale(0.95)"><path d="M0 0.6 Q3.6 0.4 4 -0.6 Q4.4 0.4 8 0.6 Q8 6 4 8.4 Q0 6 0 0.6Z" fill="#f3c928"/><path d="M0 0.6 Q3.6 0.4 4 -0.6 V3.8 H0.2Z" fill="#2e7fd8"/><path d="M4 3.8 H7.8 Q7.2 6.4 4 8.4Z" fill="#2e7fd8"/></g></svg><span class="t" style="font-size:12px;color:#000;left:68.4px;top:219.842px;transform:scaleX(0.9742);">Источники данных ODBC (64-разрядная версия)</span><svg style="left:50px;top:239px" width="16" height="16" viewBox="0 0 16 16"><rect x="0.4" y="1.6" width="15.2" height="12.8" fill="#000" stroke="#7a7f86" stroke-width=".8"/><rect x="0.8" y="2" width="14.4" height="2.2" fill="#9aa0a8"/><text x="1.4" y="11.4" font-family="Liberation Sans,sans-serif" font-size="6.4" font-weight="700" fill="#fff" textLength="9.4" lengthAdjust="spacingAndGlyphs">C:\</text><rect x="10.8" y="10.2" width="3.2" height="1.2" fill="#fff"/></svg><span class="t" style="font-size:12px;color:#000;left:68.4px;top:240.842px;transform:scaleX(0.9786);">Командная строка</span><svg style="left:50px;top:260px" width="16" height="16" viewBox="0 0 16 16"><rect x="1" y="0.6" width="13" height="10.6" rx=".8" fill="#cdd3dc" stroke="#8792a3" stroke-width=".8"/><rect x="2.4" y="2" width="10.2" height="7.8" fill="#fff" stroke="#2a4fb8" stroke-width="1.1"/><path d="M4 5.8 L5.8 7.8 L9 3.6" stroke="#1f5fd0" stroke-width="1.3" fill="none"/><path d="M9.6 7 H11.6" stroke="#1f5fd0" stroke-width="1"/><path d="M4 14.6 L5.4 11.6 H9 L10 14.6Z" fill="#c2c8d0"/><g transform="translate(8.4,7.8) scale(0.9)"><path d="M0 0.6 Q3.6 0.4 4 -0.6 Q4.4 0.4 8 0.6 Q8 6 4 8.4 Q0 6 0 0.6Z" fill="#f3c928"/><path d="M0 0.6 Q3.6 0.4 4 -0.6 V3.8 H0.2Z" fill="#2e7fd8"/><path d="M4 3.8 H7.8 Q7.2 6.4 4 8.4Z" fill="#2e7fd8"/></g></svg><span class="t" style="font-size:12px;color:#000;left:68.4px;top:261.842px;">Конфигурация системы</span><svg style="left:50px;top:281px" width="16" height="16" viewBox="0 0 16 16"><rect x="2" y="0.6" width="7.6" height="14.6" fill="#bcc3cb" stroke="#7e8791" stroke-width=".8"/><path d="M3.4 2.8 H8.2 M3.4 4.8 H8.2" stroke="#5c646d" stroke-width="1"/><rect x="3" y="7" width="5.6" height="7.4" fill="#aab2bb"/><path d="M8.8 9.4 V8 Q8.8 5.8 11 5.8 Q13.2 5.8 13.2 8 V9.4" stroke="#c79a1c" stroke-width="1.5" fill="none"/><rect x="7.2" y="9.2" width="7.8" height="6" rx=".8" fill="#efc534" stroke="#b98b12" stroke-width=".7"/><path d="M7.6 11.2 H14.6 M7.6 13 H14.6" stroke="#d9a820" stroke-width=".7"/></svg><span class="t" style="font-size:12px;color:#000;left:68.4px;top:282.842px;transform:scaleX(0.9942);">Локальная политика безопасности</span><svg style="left:50px;top:302px" width="16" height="16" viewBox="0 0 16 16"><g transform="translate(3.6,-0.4) scale(.86)"><circle cx="7" cy="7" r="6.6" fill="#2b76d2"/><path d="M3 3.4 Q5.4 1 8 2 Q9 4 7 5.2 Q5 5.6 4.6 7.8 Q3 7.4 2.2 5.6Z" fill="#45b649"/><path d="M8.4 7.4 Q11 6.8 12.6 8.6 Q12 11.6 9.6 12.8 Q8.6 10.6 8.4 7.4Z" fill="#45b649"/><circle cx="5" cy="4.4" r="2.6" fill="#9fd4ff" opacity=".45"/></g><rect x="0.6" y="6.6" width="10.8" height="8.8" fill="#a63a22"/><path d="M0.6 9.6 H11.4 M0.6 12.5 H11.4 M4.2 6.6 V9.6 M8 6.6 V9.6 M2.4 9.6 V12.5 M6 9.6 V12.5 M9.6 9.6 V12.5 M4.2 12.5 V15.4 M8 12.5 V15.4" stroke="#d98f7a" stroke-width=".7"/><path d="M0.6 6.6 L2 5.6 V6.6 M3.4 6.6 V5.6 H5.4 V6.6 M7 6.6 V5.6 H9 V6.6" fill="#a63a22" stroke="#a63a22" stroke-width=".6"/></svg><span class="t" style="font-size:12px;color:#000;left:68.4px;top:303.842px;transform:scaleX(0.9877);">Монитор брандмауэра Защитника Windows в режиме повышенной безопасности</span><svg style="left:50px;top:323px" width="16" height="16" viewBox="0 0 16 16"><circle cx="8" cy="8" r="7.4" fill="#eceef0" stroke="#a2a8af" stroke-width="1.1"/><circle cx="8" cy="8" r="5.6" fill="#fbfbfb" stroke="#c9cdd2" stroke-width=".7" stroke-dasharray="1 1.2"/><path d="M8 8.6 L5.2 3.6" stroke="#d23a2a" stroke-width="1.4"/><path d="M8 8.6 L10.6 4.4" stroke="#e2877c" stroke-width="1"/><circle cx="8" cy="8.8" r="1.1" fill="#8d949c"/></svg><span class="t" style="font-size:12px;color:#000;left:68.4px;top:324.842px;transform:scaleX(1.0092);">Монитор ресурсов</span><svg style="left:50px;top:344px" width="16" height="16" viewBox="0 0 16 16"><path d="M0.6 2 H5.4 V4 H2.8 V12.4 H10 V15 H0.6Z" fill="#d3302a"/><rect x="3.6" y="5" width="7.4" height="2.6" fill="#39a845"/><rect x="3.6" y="8" width="9" height="2.6" fill="#2f6fd6"/><rect x="5.6" y="2.2" width="3.2" height="2.6" fill="#f0c326"/><rect x="10.4" y="11" width="2.6" height="2.6" fill="#f0c326"/><rect x="12.6" y="8" width="3" height="3" fill="#7a3fc4"/><rect x="11.4" y="5" width="2.6" height="2.6" fill="#e8882a"/><rect x="13.2" y="11.6" width="2.4" height="2.8" fill="#2f6fd6"/><path d="M10.4 0.6 L13 3.4" stroke="#b13fd0" stroke-width="1.3"/><rect x="3.6" y="11" width="6.4" height="1.6" fill="#e9e2f6"/></svg><span class="t" style="font-size:12px;color:#000;left:68.4px;top:345.842px;transform:scaleX(0.9870);">Оптимизация дисков</span><svg style="left:50px;top:365px" width="16" height="16" viewBox="0 0 16 16"><path d="M0.6 2 H15 L13.4 4 H2.2Z" fill="#c9a85e"/><path d="M3.4 4 H12.6 L13.6 8.6 H2.4Z" fill="#e6d4a0"/><path d="M3 8.6 H13 L14.6 11 H1.4Z" fill="#b8bdc3"/><rect x="1.4" y="11" width="13.2" height="3.8" rx=".8" fill="#3c4248"/><rect x="11.4" y="12.2" width="1.6" height="1.4" fill="#6fe05a"/></svg><span class="t" style="font-size:12px;color:#000;left:68.4px;top:366.842px;transform:scaleX(0.9753);">Очистка диска</span><svg style="left:50px;top:386px" width="16" height="16" viewBox="0 0 16 16"><rect x="0.5" y="2" width="15" height="12" fill="#d9effc" stroke="#3fa7e8" stroke-width="1"/><circle cx="5.4" cy="7" r="3" fill="#1e7fd0"/><path d="M5.4 7 V4 A3 3 0 0 1 8.4 7Z" fill="#f2a23a"/><path d="M9.8 5 H13.6 M9.8 7.2 H13.6 M11.6 4.2 V8" stroke="#2c8fdc" stroke-width="1"/><path d="M2.4 11.6 H6.4" stroke="#f2a23a" stroke-width="1.3"/><path d="M7.4 11.6 H13.6" stroke="#2c8fdc" stroke-width="1.3"/></svg><span class="t" style="font-size:12px;color:#000;left:68.4px;top:387.842px;transform:scaleX(0.9814);">Панель управления</span><svg style="left:50px;top:407px" width="16" height="16" viewBox="0 0 16 16"><circle cx="8" cy="8" r="7.4" fill="#dfe2e6" stroke="#8f969e" stroke-width="1"/><circle cx="8" cy="8" r="5.8" fill="#fdfdfd" stroke="#b9bec5" stroke-width=".6"/><path d="M8 8 V2.4 A5.6 5.6 0 0 1 13.6 8Z" fill="#ead9ae"/><path d="M8 3.6 V8.2 H11.6" stroke="#4d545c" stroke-width="1.1" fill="none"/></svg><span class="t" style="font-size:12px;color:#000;left:68.4px;top:408.842px;">Планировщик задач</span><svg style="left:50px;top:428px" width="16" height="16" viewBox="0 0 16 16"><path d="M0.6 0.8 L11.6 0.2 L12 9 L1 9.8Z" fill="#dfe6f2" stroke="#a9b3c4" stroke-width=".6"/><path d="M1.6 1.8 L6.6 1.5 L7 8.4 L1.9 8.8Z" fill="#0a16c9"/><path d="M6.6 1.5 L10.6 1.2 L11 8 L7 8.4Z" fill="#9db6f2"/><path d="M3 12.6 H8.6 V11.4 H7 V9.6 H4.6 V11.4 H3Z" fill="#c9ced6"/><circle cx="11" cy="11" r="4.4" fill="#fff" stroke="#7d858f" stroke-width=".9"/><path d="M8.8 10.2 L10.6 11.4 L8.8 12.6 M13.2 9.2 L11.4 10.4 L13.2 11.6" stroke="#1f8a1f" stroke-width="1.2" fill="none"/></svg><span class="t" style="font-size:12px;color:#000;left:68.4px;top:429.842px;transform:scaleX(1.0079);">Подключение к удаленному рабочему столу</span><svg style="left:50px;top:449px" width="16" height="16" viewBox="0 0 16 16"><rect x="2.4" y="0.6" width="12" height="14.8" rx="1" fill="#cdd8ea" stroke="#6e7f9c" stroke-width=".9"/><path d="M4.6 3 H13 M4.6 5.2 H13 M4.6 7.4 H13 M4.6 9.6 H13 M4.6 11.8 H13" stroke="#8fa2c4" stroke-width=".8"/><path d="M1.4 2 H3.4 M1.4 4 H3.4 M1.4 6 H3.4 M1.4 8 H3.4 M1.4 10 H3.4 M1.4 12 H3.4 M1.4 14 H3.4" stroke="#5d6672" stroke-width=".9"/><path d="M9 1.6 L11.6 6 H6.4Z" fill="#f2c21c"/><rect x="6.6" y="8.2" width="4.8" height="4.8" rx=".8" fill="#d8342c"/><path d="M7.8 9.4 L10.2 11.8 M10.2 9.4 L7.8 11.8" stroke="#fff" stroke-width="1"/></svg><span class="t" style="font-size:12px;color:#000;left:68.4px;top:450.842px;transform:scaleX(1.0175);">Просмотр событий</span><svg style="left:50px;top:470px" width="16" height="16" viewBox="0 0 16 16"><g fill="#35a9e6"><rect x="0.4" y="3.6" width="3.6" height="3.6"/><rect x="4.4" y="3.6" width="3.6" height="3.6"/><rect x="8.4" y="3.6" width="3.6" height="3.6"/><rect x="0.4" y="7.6" width="3.6" height="3.6"/><rect x="4.4" y="7.6" width="3.6" height="3.6"/><rect x="0.4" y="11.6" width="3.6" height="3.6"/><rect x="4.4" y="11.6" width="3.6" height="3.6"/></g><g fill="#1678c2"><rect x="8.4" y="7.6" width="3.6" height="3.6"/><rect x="8.4" y="11.6" width="3.6" height="3.6"/></g><path d="M12.8 0.2 L15.6 3 L12.8 5.8 L10 3Z" fill="#37a8e4"/><path d="M12.8 1.6 L14.2 3 L12.8 4.4 L11.4 3Z" fill="#bfe6fa"/><rect x="10.4" y="10.2" width="3" height="3" fill="#f0c830"/><rect x="12.4" y="8" width="3" height="3" fill="#f0c830"/></svg><span class="t" style="font-size:12px;color:#000;left:68.4px;top:471.842px;transform:scaleX(0.9533);">Редактор реестра</span><svg style="left:50px;top:491px" width="16" height="16" viewBox="0 0 16 16"><rect x="0.6" y="0.8" width="14.8" height="10.6" fill="#c9ced6" stroke="#8b94a3" stroke-width=".8"/><rect x="1.8" y="2" width="12.4" height="8.2" fill="#1515b4"/><circle cx="8" cy="6.1" r="3.4" fill="#3a5fe0" stroke="#fff" stroke-width="1"/><path d="M8 5.6 V8 M8 4 V4.6" stroke="#fff" stroke-width="1.2"/><path d="M5.4 14.4 L6.6 11.4 H9.4 L10.6 14.4Z" fill="#b6bcc5"/><rect x="3.4" y="14" width="9.2" height="1.2" fill="#c9ced6"/></svg><span class="t" style="font-size:12px;color:#000;left:68.4px;top:492.842px;transform:scaleX(0.9629);">Сведения о системе</span><svg style="left:50px;top:512px" width="16" height="16" viewBox="0 0 16 16"><circle cx="8" cy="8" r="7.4" fill="#e4e6e9" stroke="#8a9098" stroke-width="1.2"/><circle cx="8" cy="8" r="5.6" fill="#fdfdfd"/><path d="M4.6 3.2 L9.8 11" stroke="#c8241c" stroke-width="1.8"/><path d="M12.4 6 Q13.4 9.6 10.6 12" stroke="#e28d86" stroke-width=".9" fill="none"/></svg><span class="t" style="font-size:12px;color:#000;left:68.4px;top:513.842px;transform:scaleX(1.0114);">Системный монитор</span><svg style="left:50px;top:533px" width="16" height="16" viewBox="0 0 16 16"><g fill="none" stroke="#8fb3d6"><circle cx="6.6" cy="6.6" r="3.6" stroke-width="2.2"/><circle cx="6.6" cy="6.6" r="5.4" stroke-width="1.6" stroke-dasharray="1.7 1.7"/><circle cx="12.4" cy="12.4" r="1.8" stroke-width="1.4"/><circle cx="12.4" cy="12.4" r="2.9" stroke-width="1.1" stroke-dasharray="1.1 1.1"/></g><circle cx="6.6" cy="6.6" r="2.2" fill="#fff"/></svg><span class="t" style="font-size:12px;color:#000;left:68.4px;top:534.842px;transform:scaleX(0.9941);">Службы</span><svg style="left:50px;top:554px" width="16" height="16" viewBox="0 0 16 16"><circle cx="8" cy="8.4" r="6.6" fill="#ebe9ee" stroke="#c2bfca" stroke-width="1"/><circle cx="7" cy="7" r="3" fill="#f2c81e" stroke="#b8920c" stroke-width=".6"/><path d="M7 5.2 V8.8 M5.2 7 H8.8" stroke="#7a5e08" stroke-width="1"/><circle cx="13.2" cy="8.8" r="1.5" fill="#3aa845"/><circle cx="3.4" cy="2.4" r="1.5" fill="#7a6fd8"/><circle cx="3" cy="11.6" r="1.3" fill="#c78fd8"/></svg><span class="t" style="font-size:12px;color:#000;left:68.4px;top:555.842px;transform:scaleX(1.0131);">Службы компонентов</span><svg style="left:50px;top:575px" width="16" height="16" viewBox="0 0 16 16"><rect x="0.5" y="0.8" width="15" height="12.8" fill="#f4f5f6" stroke="#7b828b" stroke-width=".9"/><rect x="0.9" y="1.2" width="14.2" height="2" fill="#c4c9cf"/><path d="M10.6 2.2 H13.8" stroke="#5e656d" stroke-width=".8" stroke-dasharray=".9 .7"/><rect x="3.4" y="5.8" width="8" height="5.6" fill="#2d3238"/><path d="M3.4 6.4 H2.2 M3.4 8 H2.2 M3.4 9.6 H2.2 M3.4 11 H2.2" stroke="#2d3238" stroke-width=".9"/><g transform="translate(8.4,7.4) scale(0.92)"><path d="M0 0.6 Q3.6 0.4 4 -0.6 Q4.4 0.4 8 0.6 Q8 6 4 8.4 Q0 6 0 0.6Z" fill="#f3c928"/><path d="M0 0.6 Q3.6 0.4 4 -0.6 V3.8 H0.2Z" fill="#2e7fd8"/><path d="M4 3.8 H7.8 Q7.2 6.4 4 8.4Z" fill="#2e7fd8"/></g></svg><span class="t" style="font-size:12px;color:#000;left:68.4px;top:576.842px;transform:scaleX(0.9913);">Средство проверки памяти Windows</span><svg style="left:50px;top:596px" width="16" height="16" viewBox="0 0 16 16"><path d="M2 4.4 L8.6 3 L10 11.4 L1 12.6Z" fill="#b9c9e2" stroke="#8fa0bc" stroke-width=".6"/><path d="M8.6 3 L14.6 4 L15 10.8 L10 11.4Z" fill="#9fb2d2" stroke="#8fa0bc" stroke-width=".6"/><text x="3" y="10.8" font-family="Liberation Sans,sans-serif" font-size="7.5" fill="#3f5fa8">λ</text><text x="10.6" y="10.4" font-family="Liberation Sans,sans-serif" font-size="6.5" font-weight="700" fill="#3f8a5a">?</text></svg><span class="t" style="font-size:12px;color:#000;left:68.4px;top:597.842px;">Таблица символов</span><svg style="left:50px;top:617px" width="16" height="16" viewBox="0 0 16 16"><path d="M4.6 0.6 H15.4 V9.6 H4.6Z" fill="#d6dbe3" stroke="#8b94a3" stroke-width=".8"/><path d="M5.8 1.8 H10 L9 8.4 H5.8Z" fill="#0a16c9"/><path d="M10 1.8 H14.2 V8.4 H9Z" fill="#9db6f2"/><rect x="0.4" y="9.6" width="11.6" height="5.6" fill="#7a828c" stroke="#59616b" stroke-width=".6"/><path d="M1.6 12.6 H3 M4.2 12.6 H5.6 M6.8 12.6 H8.2 M9.4 12.6 H10.8" stroke="#e6e9ec" stroke-width="1.2"/><rect x="0.6" y="5" width="3.4" height="4.6" fill="#aeb6c0"/><path d="M1.6 6 L3 7.4" stroke="#3a9a3a" stroke-width="1"/></svg><span class="t" style="font-size:12px;color:#000;left:68.4px;top:618.842px;transform:scaleX(1.0118);">Управление компьютером</span><svg style="left:50px;top:638px" width="16" height="16" viewBox="0 0 16 16"><path d="M1.2 0.8 Q3.6 0 4.4 2 L3.4 3.6 V14 Q3.4 15.2 2.4 15.2 Q1.4 15.2 1.4 14 V4 Q0 2.6 1.2 0.8Z" fill="#f0c428" stroke="#a88410" stroke-width=".6"/><path d="M1.6 1 L2.6 2.4 L3.8 1.4" stroke="#fff" stroke-width=".9" fill="none"/><rect x="6" y="2" width="7.4" height="4" fill="#fff" stroke="#9098a2" stroke-width=".7"/><rect x="4.4" y="5.6" width="11" height="6" rx=".8" fill="#d9dde2" stroke="#7e8791" stroke-width=".8"/><rect x="5.4" y="8.6" width="9" height="2.2" fill="#5a626c"/><rect x="6.4" y="10.6" width="6.6" height="4" fill="#fff" stroke="#9098a2" stroke-width=".7"/><rect x="7.8" y="12.6" width="3.6" height="1.6" fill="#1f8fd8"/></svg><span class="t" style="font-size:12px;color:#000;left:68.4px;top:639.842px;transform:scaleX(0.9945);">Управление печатью</span></div><div class="a" style="left:0;top:1002px;width:1680px;height:48px;background:#1c1c1c;border-top:1px solid #3c3f46;box-sizing:border-box;"></div><svg style="left:21px;top:1015px" width="24" height="24" viewBox="0 0 24 24">
<defs><linearGradient id="wl" x1="0" y1="0" x2="1" y2="1"><stop offset="0" stop-color="#79e2fd"/><stop offset="1" stop-color="#1b9cf0"/></linearGradient></defs>
<path d="M1 0 H11 V11 H0 V1 Q0 0 1 0Z M12.6 0 H22.6 Q23.6 0 23.6 1 V11 H12.6Z M0 12.6 H11 V23.6 H1 Q0 23.6 0 22.6Z M12.6 12.6 H23.6 V22.6 Q23.6 23.6 22.6 23.6 H12.6Z" fill="url(#wl)"/></svg><div class="a" style="left:57px;top:1010px;width:220px;height:32px;border-radius:16px;background:#3a3a3a;box-shadow:inset 0 1px 0 #4c4c4c;"></div><svg style="left:67px;top:1017px" width="18" height="18" viewBox="0 0 18 18" fill="none" stroke="#fff" stroke-width="1.5"><circle cx="7.6" cy="7.6" r="5.6"/><path d="M11.8 11.8 L16.4 16.4" stroke-linecap="round"/></svg><span class="t" style="font-size:14.5px;color:#e4e4e4;left:94.4px;top:1018.73px;transform:scaleX(0.9953);">Поиск</span><svg style="left:289px;top:1014px" width="25" height="23" viewBox="0 0 25 23">
<defs><linearGradient id="fe1" x1="0" y1="0" x2="0" y2="1"><stop offset="0" stop-color="#fcd565"/><stop offset="1" stop-color="#f6bd33"/></linearGradient></defs>
<path d="M0 3 Q0 1 2 1 H8 Q9 1 9.8 1.8 L11.6 3.8 H22.6 Q24.6 3.8 24.6 5.8 V20 Q24.6 22.4 22.6 22.4 H2 Q0 22.4 0 20Z" fill="#e7a81c"/>
<path d="M0 8 Q0 6 2 6 H22.6 Q24.6 6 24.6 8 V20 Q24.6 22.4 22.6 22.4 H2 Q0 22.4 0 20Z" fill="url(#fe1)"/>
<path d="M5.4 22.4 V16.6 Q5.4 14.6 7.4 14.6 H17.2 Q19.2 14.6 19.2 16.6 V22.4Z" fill="#1a7fd4"/><path d="M7.6 17.4 H17" stroke="#0f5ea8" stroke-width="1.2"/></svg><svg style="left:333px;top:1014px" width="24" height="24" viewBox="0 0 24 24">
<path d="M7 6 V3.6 Q7 1 9.6 1 H14.4 Q17 1 17 3.6 V6" stroke="#2f9be8" stroke-width="1.8" fill="none"/>
<path d="M0 7.6 Q0 5.6 2 5.6 H22 Q24 5.6 24 7.6 V20 Q24 23.6 20.4 23.6 H3.6 Q0 23.6 0 20Z" fill="#f5f6f8"/>
<rect x="7" y="9.6" width="4.4" height="4.4" fill="#f25022"/><rect x="12.6" y="9.6" width="4.4" height="4.4" fill="#7fba00"/><rect x="7" y="15.2" width="4.4" height="4.4" fill="#00a4ef"/><rect x="12.6" y="15.2" width="4.4" height="4.4" fill="#ffb900"/></svg><svg style="left:380px;top:1014px" width="18" height="24" viewBox="0 0 18 24">
<rect x="0" y="0" width="18" height="24" rx="1.6" fill="#6f7a86"/><rect x="1.8" y="2" width="14.4" height="5" rx=".6" fill="#5cc9f6"/>
<g fill="#dfe4e9"><rect x="1.8" y="9" width="4" height="3.6"/><rect x="7" y="9" width="4" height="3.6"/><rect x="12.2" y="9" width="4" height="3.6"/><rect x="1.8" y="13.8" width="4" height="3.6"/><rect x="7" y="13.8" width="4" height="3.6"/><rect x="1.8" y="18.6" width="4" height="3.6"/><rect x="7" y="18.6" width="4" height="3.6"/></g>
<rect x="12.2" y="13.8" width="4" height="8.4" fill="#1b4e9a"/></svg><svg style="left:421px;top:1014px" width="25" height="24" viewBox="0 0 25 24">
<rect x="0" y="0" width="18" height="18" rx="2.4" fill="#f6efee"/>
<g fill="#b8371c"><rect x="2.4" y="2.2" width="2.8" height="2.8" rx=".6"/><rect x="6.4" y="2.2" width="2.8" height="2.8" rx=".6"/><rect x="10.4" y="2.2" width="2.8" height="2.8" rx=".6"/><rect x="2.4" y="6.2" width="2.8" height="2.8" rx=".6"/><rect x="2.4" y="10.2" width="2.8" height="2.8" rx=".6"/><rect x="2.4" y="14" width="2.8" height="2.4" rx=".6"/></g>
<rect x="6.6" y="6.4" width="8" height="8" fill="#e6e2e4"/>
<path d="M13.6 6 V14.6 H5.6" stroke="#a9adb4" stroke-width="2" fill="none"/>
<path d="M14 14.6 L20.4 13.2 M14 14.6 L12.6 20.4" stroke="#9aa0a8" stroke-width="1.8"/>
<circle cx="22" cy="12.8" r="2" fill="none" stroke="#2e9be0" stroke-width="1.5"/><circle cx="12.2" cy="21.6" r="2" fill="none" stroke="#2e9be0" stroke-width="1.5"/></svg><svg style="left:466px;top:1014px" width="24" height="24" viewBox="0 0 48 49">
<ellipse cx="19" cy="42.5" rx="11" ry="4" fill="#cfd3d9"/><path d="M14 33 L24 32 L25 41 L14.5 41.5Z" fill="#c4c9d1"/>
<path d="M4.5 1 L36 3.4 L34 35 L1 30.5Z" fill="#d9dee8" stroke="#9aa3b2" stroke-width="1"/>
<path d="M7 4 L33.5 6 L31.8 31.8 L4 28Z" fill="#1424c4"/><path d="M7 4 L18 4.8 L13 29.2 L4 28Z" fill="#4a63ea" opacity=".55"/><path d="M22 5.2 L33.5 6 L32.6 20 Z" fill="#b9c8f6" opacity=".8"/>
<circle cx="35" cy="36" r="10.6" fill="#f4f5f6" stroke="#8e959e" stroke-width="2"/>
<path d="M29.6 33.6 L33.8 36.4 L29.6 39.4 M40.6 31.2 L36.2 34.2 L40.6 37.2" stroke="#2c9a27" stroke-width="2.8" fill="none"/></svg><svg style="left:509px;top:1016px" width="25" height="20" viewBox="0 0 25 20">
<rect x="0.6" y="0.6" width="23.8" height="18.4" fill="#2aa0e8" stroke="#1878c4" stroke-width="1.2"/><rect x="2" y="2" width="21" height="15.6" fill="#38b0f2"/>
<circle cx="8" cy="8" r="4.6" fill="#d9f0fd"/><path d="M8 8 V3.4 A4.6 4.6 0 0 1 12.6 8Z" fill="#f2a23a"/>
<path d="M14.6 5 H18 M14.6 11 H18 M16.2 5 V11" stroke="#d9f0fd" stroke-width="1"/><rect x="17.6" y="3.4" width="3.4" height="3" fill="#d9f0fd"/><rect x="17.6" y="9.4" width="3.4" height="3" fill="#d9f0fd"/>
<path d="M3.4 15.4 H9" stroke="#f2a23a" stroke-width="1.6"/><path d="M10.6 15.4 H21" stroke="#d9f0fd" stroke-width="1.6"/></svg><div class="a" style="left:386px;top:1042px;width:6px;height:3px;border-radius:1.5px;background:#8c8c8c;"></div><div class="a" style="left:430px;top:1042px;width:6px;height:3px;border-radius:1.5px;background:#8c8c8c;"></div><div class="a" style="left:474px;top:1042px;width:6px;height:3px;border-radius:1.5px;background:#8c8c8c;"></div><div class="a" style="left:518px;top:1042px;width:6px;height:3px;border-radius:1.5px;background:#8c8c8c;"></div><span class="t" style="font-size:12px;color:#ffffff;left:1484.5px;top:1020.54px;transform:scaleX(0.8531);">РУС</span><svg style="left:1523px;top:1018px" width="18" height="17" viewBox="0 0 18 17" fill="none" stroke="#fff" stroke-width="1.1">
<path d="M15.2 7.2 A7.2 7.2 0 1 0 8 15.2"/><path d="M8 0.8 Q4 4 4.4 8 Q4.6 12 8 15.2 M8 0.8 Q11.4 3.6 11.6 7.4 M1 5.4 H14.6 M1 10.6 H8.6"/>
<circle cx="12.8" cy="12" r="3.6"/><path d="M10.4 14.4 L15.2 9.6"/></svg><svg style="left:1548px;top:1019px" width="17" height="14" viewBox="0 0 17 14" fill="none" stroke="#fff" stroke-width="1.1">
<path d="M0.6 4.6 H3.4 L7 1 V13 L3.4 9.4 H0.6Z" stroke-linejoin="round"/><path d="M9.4 4.6 Q10.6 7 9.4 9.4"/><path d="M11.6 2.8 Q13.8 7 11.6 11.2"/><path d="M13.8 1 Q16.8 7 13.8 13" stroke="#7d7d7d"/></svg><span class="t" style="font-size:12px;color:#ffffff;right:43.2px;top:1011.84px;transform-origin:100% 50%;transform:scaleX(0.9257);">22:05</span><span class="t" style="font-size:12px;color:#ffffff;right:43.2px;top:1027.74px;transform-origin:100% 50%;transform:scaleX(0.9390);">05.01.2026</span><svg style="left:1645px;top:1018px" width="15" height="17" viewBox="0 0 15 17">
<path d="M6 2.4 Q2.6 3 2.4 6.8 L2 10.6 L0.6 12.6 H11.6 L10.2 10.6 L10 8.4" fill="#fff" stroke="#fff" stroke-width=".8"/><path d="M4.4 14 Q6 16 7.8 14Z" fill="#fff" stroke="#fff" stroke-width=".8"/>
<text x="4" y="9.2" font-family="Liberation Sans,sans-serif" font-size="5.6" font-weight="700" fill="#1c1c1c">z</text>
<text x="9" y="6" font-family="Liberation Sans,sans-serif" font-size="7.6" font-weight="700" fill="#fff">z</text></svg></body></html>
